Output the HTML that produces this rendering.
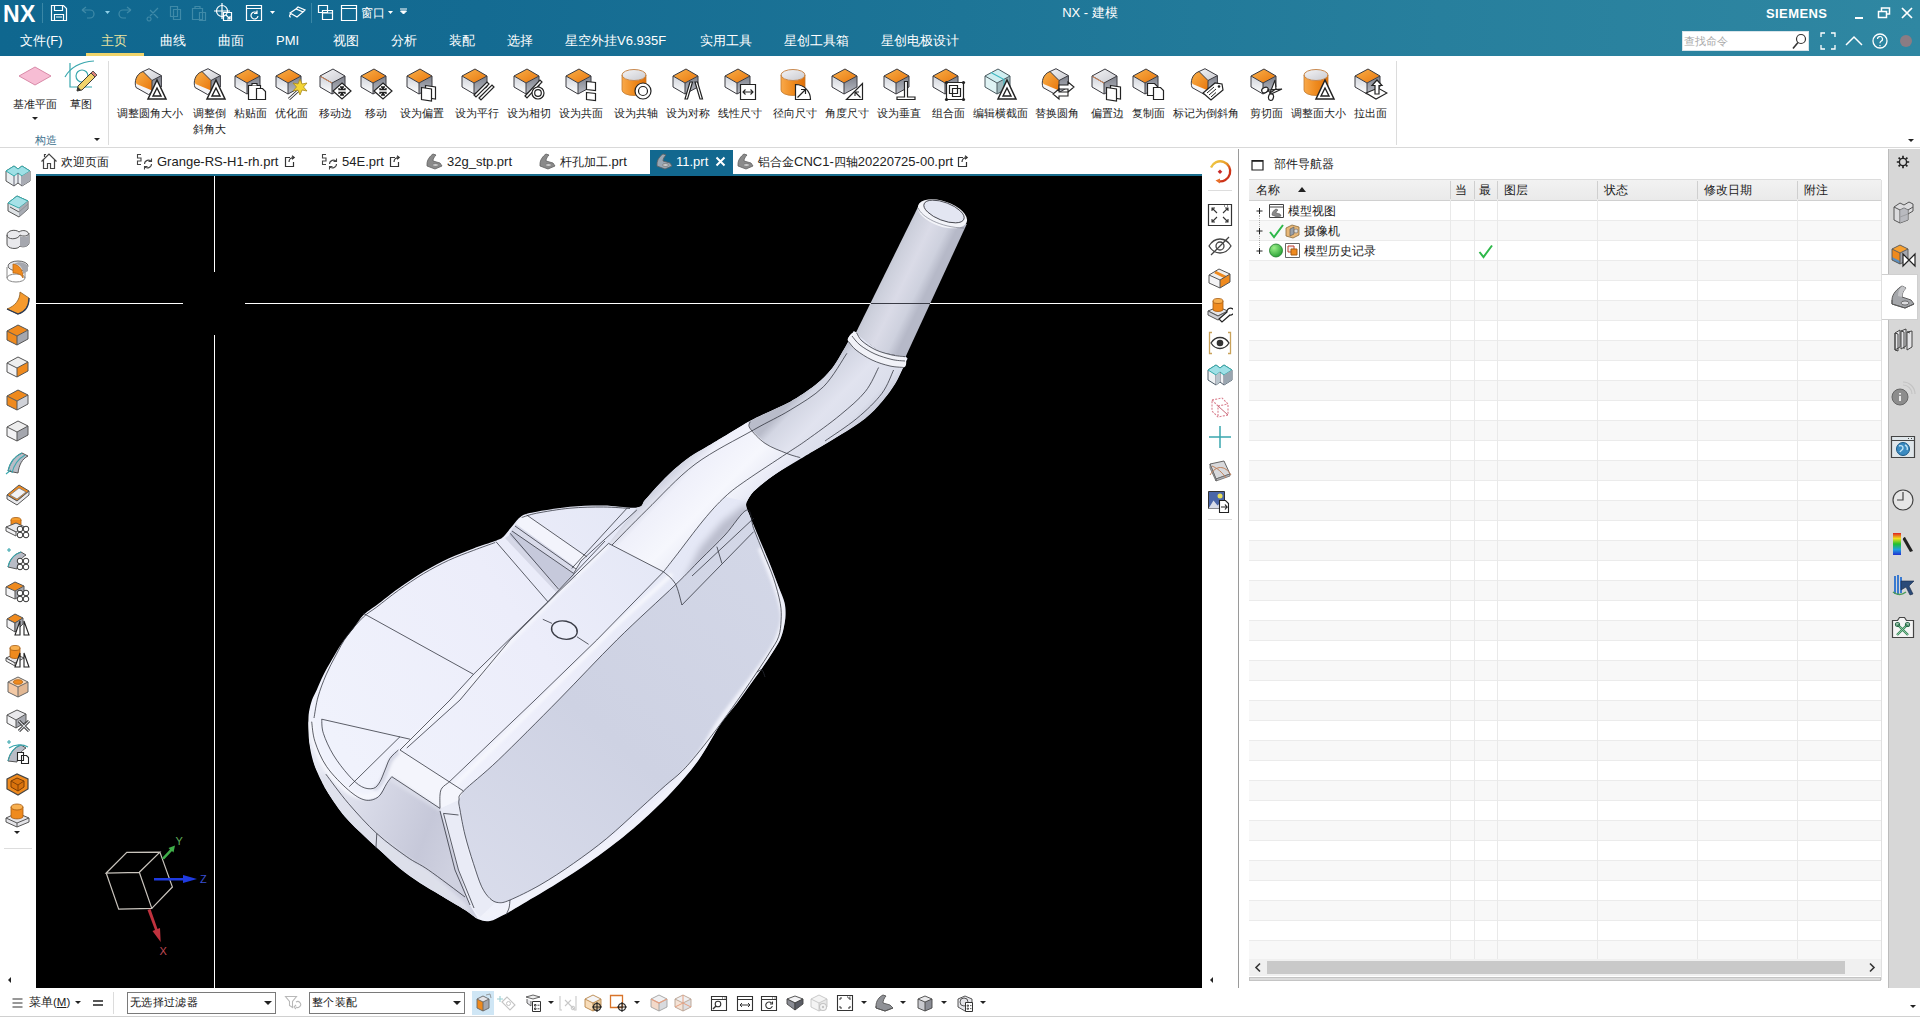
<!DOCTYPE html><html><head><meta charset="utf-8"><title>NX</title><style>*{box-sizing:border-box;margin:0;padding:0}
html,body{width:1920px;height:1019px;overflow:hidden;background:#fff;font-family:"Liberation Sans",sans-serif;color:#222}
.abs{position:absolute}
#hdr{position:absolute;left:0;top:0;width:1920px;height:56px;background:linear-gradient(90deg,#0f678f 0%,#146b92 25%,#1d7597 50%,#277f9d 75%,#2f87a2 100%)}
.menu{position:absolute;top:32px;height:18px;line-height:18px;font-size:13px;color:#fff;white-space:nowrap}
.rlabel{position:absolute;font-size:11px;line-height:16px;color:#222;text-align:center;white-space:nowrap;transform:translateX(-50%)}
.tab{position:absolute;top:153px;height:18px;line-height:18px;font-size:13px;color:#222;white-space:nowrap}
#vp{position:absolute;left:36px;top:176px;width:1166px;height:812px;background:#000;overflow:hidden}
.nh{position:absolute;top:182px;height:17px;line-height:17px;font-size:12px;color:#222;white-space:nowrap}
.tr{position:absolute;font-size:12px;line-height:18px;color:#222;white-space:nowrap}
</style></head><body>
<div id="hdr">
<div class="abs" style="left:3px;top:1px;font-size:23px;line-height:26px;font-weight:bold;color:#fff;letter-spacing:0.5px">NX</div>
<svg class="abs" style="left:40px;top:0" width="380" height="27" viewBox="40 0 380 27" fill="none" stroke="#fff" stroke-width="1.2">
<line x1="42.5" y1="3" x2="42.5" y2="23" stroke="#3a87a6" stroke-width="1"/>
<path d="M51.5 5.5h12l3 3v12h-15z M54.5 5.5v5h8v-5 M54.5 20.500v-6h9v6 M56 17h6"/>
<g stroke="#3f8aa8"><path d="M82 10l4-3m-4 3l4 3m-4-3h8a4 4 0 0 1 0 8h-3"/><path d="M131 10l-4-3m4 3l-4 3m4-3h-8a4 4 0 0 0 0 8h3"/>
<path d="M150 16l8-8m-8 2l8 8 M149 17a2 2 0 1 0 .1 0"/><path d="M170.500 6.500h7v10h-7z M173.500 9.500h7v10h-7z"/><path d="M192.500 8.500h10v11h-10z M195 8.500v-2h5v2 M199.500 12.500h6v8h-6z"/></g>
<path d="M105 11h5l-2.500 3z" fill="#8fd0e8" stroke="none"/>
<circle cx="222" cy="11" r="5.500"/><path d="M222 3v16 M214 11h16 M223.500 12.500h8v8h-8z M226 15l4 4m0-3v3h-3"/>
<path d="M246.500 5.500h15v15h-15z M246.500 8.500h15 M257 13a3.500 3.500 0 1 0 1 3 M257 10.500v3h-3"/>
<path d="M270 11h5l-2.500 3z" fill="#fff" stroke="none"/>
<path d="M290 13l6-4 7 3-6 5z M296 9l2-2 7 3-2 2 M291 14c-2 1-2 3 0 3" />
<line x1="311.500" y1="3" x2="311.500" y2="23" stroke="#3a87a6" stroke-width="1"/>
<path d="M318.500 5.500h9v7h-9z M322.500 10.500h10v9h-10z M322.500 13h10"/>
<path d="M341.500 5.500h15v15h-15z M341.500 8.500h15"/>
<path d="M388 11h5l-2.500 3z" fill="#fff" stroke="none"/><path d="M400 9h7 M400.500 11h6l-3 3z" fill="#fff" stroke-width="1"/>
</svg>
<div class="abs" style="left:361px;top:5px;font-size:12px;line-height:16px;color:#fff">窗口</div>
<div class="abs" style="left:1040px;width:100px;text-align:center;top:4px;font-size:13px;line-height:18px;color:#fff">NX - 建模</div>
<div class="abs" style="left:1766px;top:6px;font-size:13px;line-height:16px;font-weight:bold;color:#fff;letter-spacing:0.4px">SIEMENS</div>
<svg class="abs" style="left:1845px;top:0" width="75" height="27" viewBox="1845 0 75 27" fill="none" stroke="#fff" stroke-width="1.500">
<path d="M1855 18h8" stroke-width="2"/><path d="M1878.500 11.500h8v6h-8z M1881.500 11v-3h8v6h-3"/><path d="M1902 8l10 10m0-10l-10 10" stroke-width="1.700"/></svg>
<div class="menu" style="left:20px;color:#fff">文件(F)</div>
<div class="menu" style="left:101px;color:#e9e3a0">主页</div>
<div class="menu" style="left:160px;color:#fff">曲线</div>
<div class="menu" style="left:218px;color:#fff">曲面</div>
<div class="menu" style="left:276px;color:#fff">PMI</div>
<div class="menu" style="left:333px;color:#fff">视图</div>
<div class="menu" style="left:391px;color:#fff">分析</div>
<div class="menu" style="left:449px;color:#fff">装配</div>
<div class="menu" style="left:507px;color:#fff">选择</div>
<div class="menu" style="left:565px;color:#fff">星空外挂V6.935F</div>
<div class="menu" style="left:700px;color:#fff">实用工具</div>
<div class="menu" style="left:784px;color:#fff">星创工具箱</div>
<div class="menu" style="left:881px;color:#fff">星创电极设计</div>
<div class="abs" style="left:86px;top:53px;width:58px;height:3px;background:#f0d46a"></div>
<div class="abs" style="left:1682px;top:31px;width:127px;height:20px;background:#fff;border:1px solid #d8e4ea;font-size:11px;line-height:18px;color:#aaa;padding-left:1px">查找命令</div>
<svg class="abs" style="left:1785px;top:28px" width="135" height="27" viewBox="1785 28 135 27" fill="none" stroke="#fff" stroke-width="1.300">
<circle cx="1801" cy="39" r="4.500" stroke="#333" stroke-width="1.200"/><path d="M1798 42.500l-5 6" stroke="#333" stroke-width="1.600"/>
<path d="M1821 37v-4h4 M1831 33h4v4 M1835 45v4h-4 M1825 49h-4v-4"/>
<path d="M1846 45l8-8 8 8" stroke-width="1.500"/>
<circle cx="1880" cy="41" r="7"/><path d="M1877.500 39a2.500 2.500 0 1 1 3.500 2.300c-1 .5-1 1-1 2 M1880 45v1.200" stroke-width="1.200"/>
<circle cx="1906" cy="41" r="6" fill="#a9787a" stroke="none" opacity="0.75"/>
</svg>
</div>
<svg width="0" height="0" style="position:absolute"><defs>
<linearGradient id="gO" x1="0" y1="0" x2="1" y2="1"><stop offset="0" stop-color="#f9b04a"/><stop offset="1" stop-color="#e8760c"/></linearGradient>
<linearGradient id="gL" x1="0" y1="0" x2="0" y2="1"><stop offset="0" stop-color="#cfd2da"/><stop offset="1" stop-color="#ffffff"/></linearGradient>
<linearGradient id="gR" x1="0" y1="0" x2="0" y2="1"><stop offset="0" stop-color="#7d808a"/><stop offset="1" stop-color="#b9bcc4"/></linearGradient>
<linearGradient id="gT" x1="0" y1="0" x2="1" y2="1"><stop offset="0" stop-color="#f4f4f6"/><stop offset="1" stop-color="#c9cad0"/></linearGradient>
<linearGradient id="gC" x1="0" y1="0" x2="1" y2="0"><stop offset="0" stop-color="#f9a94a"/><stop offset=".5" stop-color="#ee8a1e"/><stop offset="1" stop-color="#e07008"/></linearGradient>
<g id="cOT"><path d="M1 8L14 1 26 8 13 15Z" fill="url(#gO)"/><path d="M1 8L13 15V26L1 19Z" fill="url(#gL)"/><path d="M13 15L26 8V19L13 26Z" fill="url(#gR)"/><path d="M1 8L14 1 26 8V19L13 26 1 19Z M1 8L13 15 26 8 M13 15V26" fill="none" stroke="#3a3a40" stroke-width="1"/></g>
<g id="cGT"><path d="M1 8L14 1 26 8 13 15Z" fill="url(#gT)"/><path d="M1 8L13 15V26L1 19Z" fill="url(#gL)"/><path d="M13 15L26 8V19L13 26Z" fill="url(#gR)"/><path d="M1 8L14 1 26 8V19L13 26 1 19Z M1 8L13 15 26 8 M13 15V26" fill="none" stroke="#3a3a40" stroke-width="1"/><path d="M1.500 8.500L13 15" stroke="#d98a5a" stroke-width="1"/></g>
<g id="cOL"><path d="M9 3.500L15 .7 27.400 7.600 18 12.500Z" fill="url(#gT)"/><path d="M18 12.500L27.400 7.600V19L18 25.500Z" fill="url(#gR)"/><path d="M2 16L18 22V25.500L14.500 26.500 2 19.500Z" fill="#f4f4f7"/><path d="M9 3.500L18 12.500V22.500L2.500 16C.5 12 2 6 9 3.500Z" fill="url(#gO)"/><path d="M9 3.500L15 .7 27.400 7.600V19L14.500 26.500 2 19.500C0 14 2 6 9 3.500ZM9 3.500L18 12.500 27.400 7.600M18 12.500V25" fill="none" stroke="#3a3a40" stroke-width="1"/></g>
<g id="cCY"><path d="M2 7V22A12 5.500 0 0 0 26 22V7Z" fill="url(#gC)"/><ellipse cx="14" cy="7" rx="12" ry="5.500" fill="url(#gT)" stroke="#c98a50" stroke-width="1"/><path d="M2 7V22A12 5.500 0 0 0 26 22V7" fill="none" stroke="#c07a30" stroke-width=".8"/></g>
<g id="cTE"><path d="M1 8L14 1 26 8 13 15Z" fill="#cfeef0"/><path d="M1 8L13 15V26L1 19Z" fill="#dff3f4"/><path d="M13 15L26 8V19L13 26Z" fill="#9fb8bc"/><path d="M1 8L14 1 26 8V19L13 26 1 19Z M1 8L13 15 26 8 M13 15V26" fill="none" stroke="#4a5a60" stroke-width="1"/><path d="M7 4.500L20 11.500V22" fill="none" stroke="#3bb7c0" stroke-width="1.200"/></g>
<g id="oTri"><path d="M23 12L32 31H14Z" fill="#fff" stroke="#222" stroke-width="1.500" stroke-linejoin="miter"/><path d="M23 20L27 28H19Z" fill="none" stroke="#222" stroke-width="1.400"/></g>
<g id="oClip"><path d="M14.500 17.500h12v14h-12z" fill="#fff" stroke="#222" stroke-width="1.200"/><path d="M18 17.500v-2h5v2" fill="#fff" stroke="#222" stroke-width="1.200"/><path d="M22.500 20.500h6l3 3v8h-9z" fill="#fff" stroke="#222" stroke-width="1.200"/></g>
<g id="oWand"><path d="M14 31l10-9" stroke="#222" stroke-width="3"/><path d="M14 31l10-9" stroke="#fff" stroke-width="1.200"/><path d="M25 11l2 5 5-1-3.500 4 3.500 4-5-1-2 5-2-5-5 1 3.500-4-3.500-4 5 1z" fill="#f3d433" stroke="#a8891c" stroke-width=".8"/></g>
<g id="oMove"><path d="M23 15l9 8-9 8-9-8z" fill="#fff" stroke="#222" stroke-width="1.200"/><path d="M21 19h1.500v2.500H20V20 M25 19h-1.500v2.500H26V20 M21 27h1.500v-2.500H20V26 M25 27h-1.500v-2.500H26V26" fill="none" stroke="#222" stroke-width="1.300"/></g>
<g id="oPages"><path d="M19.500 17.500l10 1.500v12l-10-1.500z" fill="#fff" stroke="#222" stroke-width="1.200"/><path d="M15.500 19.500l10 1.500v12l-10-1.500z" fill="#fff" stroke="#222" stroke-width="1.200"/></g>
<g id="oPar"><path d="M13 27L26 14l2 2L15 29z M18 30L31 17l2 2L20 32z" fill="#fff" stroke="#222" stroke-width="1.200"/></g>
<g id="oTan"><path d="M12 28L27 12l2 2L14 30z" fill="#fff" stroke="#222" stroke-width="1.200"/><circle cx="25" cy="25" r="6" fill="#fff" stroke="#222" stroke-width="1.200"/><circle cx="25" cy="25" r="3.300" fill="#fff" stroke="#222" stroke-width="1.200"/></g>
<g id="oCopl"><path d="M21.500 13.500l9 1v8l-9-1z M21.500 24.500l9 1v7l-9-1z" fill="#fff" stroke="#222" stroke-width="1.200"/></g>
<g id="oRing"><circle cx="23" cy="23" r="8" fill="#fff" stroke="#222" stroke-width="1.200"/><circle cx="23" cy="23" r="4.500" fill="#fff" stroke="#222" stroke-width="1.200"/></g>
<g id="oSym"><path d="M13 31l5-17h2.500l-5 17z M30.500 31l-5-17H23l5 17z" fill="#fff" stroke="#222" stroke-width="1.200"/></g>
<g id="oLin"><path d="M16.500 16.500h15v15h-15z" fill="#fff" stroke="#222" stroke-width="1.200"/><path d="M19 24h10 M21.500 21.500L19 24l2.500 2.500 M26.500 21.500L29 24l-2.500 2.500" fill="none" stroke="#222" stroke-width="1.100"/></g>
<g id="oRad"><path d="M16.500 16.500A15 15 0 0 1 31.500 31.500H16.500Z" fill="#fff" stroke="#222" stroke-width="1.200"/><path d="M18.500 29.500l8-8 M22 21.500h4.500V26" fill="none" stroke="#222" stroke-width="1.200"/></g>
<g id="oAng"><path d="M31.500 15.500v16h-16Z" fill="#fff" stroke="#222" stroke-width="1.200"/><path d="M29.500 29.500l-5-5 M24 28v-4h4" fill="none" stroke="#222" stroke-width="1.100"/></g>
<g id="oPerp"><path d="M21.500 13.500h3v15.500h7.500v2.500h-18v-2.500h7.500z" fill="#fff" stroke="#222" stroke-width="1.200"/></g>
<g id="oComb"><path d="M14.500 14.500h17v17h-17z" fill="#fff" stroke="#222" stroke-width="1.200"/><path d="M17.500 17.500h8v8h-8z M20.500 20.500h8v8h-8z" fill="none" stroke="#222" stroke-width="1.200"/><g fill="#222"><circle cx="14.500" cy="14.500" r="1.600"/><circle cx="31.500" cy="14.500" r="1.600"/><circle cx="14.500" cy="31.500" r="1.600"/><circle cx="31.500" cy="31.500" r="1.600"/></g></g>
<g id="oSwap"><path d="M18 17h9v-3l6 5-6 5v-3h-9z" fill="#fff" stroke="#222" stroke-width="1.100"/><path d="M27 24h-9v-3l-6 5 6 5v-3h9z" fill="#fff" stroke="#222" stroke-width="1.100"/></g>
<g id="oCopy"><path d="M15.500 15.500h7l3 3v9h-10z" fill="#fff" stroke="#222" stroke-width="1.200"/><path d="M21.500 19.500h7l3 3v9h-10z" fill="#fff" stroke="#222" stroke-width="1.200"/></g>
<g id="oTag"><path d="M13 25l12-10 7 1 1 6-12 10z" fill="#fff" stroke="#222" stroke-width="1.200"/><circle cx="29" cy="18.500" r="1.300" fill="#222"/><path d="M17 25l7-6 M19 27l7-6 M21 29l5-4.500" stroke="#222" stroke-width="1"/></g>
<g id="oScis"><ellipse cx="15" cy="22" rx="3.500" ry="2.500" fill="#fff" stroke="#222" stroke-width="1.200" transform="rotate(-30 15 22)"/><ellipse cx="21" cy="29" rx="2.500" ry="3.500" fill="#fff" stroke="#222" stroke-width="1.200" transform="rotate(10 21 29)"/><path d="M18 22l14-1-11 5z M20 25l5-13 1 9z" fill="#fff" stroke="#222" stroke-width="1.100"/></g>
<g id="oUp"><path d="M12 25l12-5 9 5-11 6z" fill="#fff" stroke="#222" stroke-width="1.100"/><path d="M23 12l5 5.500h-3V26h-4v-8.500h-3z" fill="#fff" stroke="#222" stroke-width="1.200"/></g>
</defs></svg>
<div class="abs" style="left:0;top:56px;width:1920px;height:92px;background:#fff;border-bottom:1px solid #d9d9d9"></div>
<svg class="abs" style="left:10px;top:58px" width="100" height="44" viewBox="10 58 100 44">
<path d="M19 76L35 67 51 76 35 85Z" fill="#f7bdd4" stroke="#d98aa8" stroke-width="1"/>
<path d="M70 63V87H92" fill="none" stroke="#3aa7ae" stroke-width="1.200"/><path d="M65 77C70 68 80 62 94 61" fill="none" stroke="#3aa7ae" stroke-width="1.200"/><circle cx="82" cy="76" r="6" fill="none" stroke="#3aa7ae" stroke-width="1.200"/>
<path d="M77 91l1-5 13-13 4 4-13 13z" fill="#f2d36b" stroke="#3a3a3a" stroke-width="1"/><path d="M91 73l2-2 4 4-2 2z" fill="#d9837a" stroke="#3a3a3a" stroke-width=".8"/><path d="M77 91l1-4 3 3z" fill="#333"/>
</svg>
<div class="rlabel" style="left:35px;top:96px">基准平面</div>
<div class="rlabel" style="left:81px;top:96px">草图</div>
<div class="abs" style="left:32px;top:117px;width:0;height:0;border-left:3px solid transparent;border-right:3px solid transparent;border-top:3.500px solid #222"></div>
<div class="rlabel" style="left:46px;top:132px;color:#3b6f8c">构造</div>
<div class="abs" style="left:94px;top:138px;width:0;height:0;border-left:3px solid transparent;border-right:3px solid transparent;border-top:3.500px solid #222"></div>
<div class="abs" style="left:108px;top:61px;width:1px;height:84px;background:#dcdcdc"></div>
<div class="abs" style="left:1396px;top:61px;width:1px;height:84px;background:#dcdcdc"></div>
<svg class="abs" style="left:134px;top:68px" width="34" height="34" viewBox="0 0 34 34"><use href="#cOL"/><use href="#oTri"/></svg>
<div class="rlabel" style="left:150px;top:105px">调整圆角大小</div>
<svg class="abs" style="left:193px;top:68px" width="34" height="34" viewBox="0 0 34 34"><use href="#cOL"/><use href="#oTri"/></svg>
<div class="rlabel" style="left:209px;top:105px">调整倒<br>斜角大</div>
<svg class="abs" style="left:234px;top:68px" width="34" height="34" viewBox="0 0 34 34"><use href="#cOT"/><use href="#oClip"/></svg>
<div class="rlabel" style="left:250px;top:105px">粘贴面</div>
<svg class="abs" style="left:275px;top:68px" width="34" height="34" viewBox="0 0 34 34"><use href="#cOT"/><use href="#oWand"/></svg>
<div class="rlabel" style="left:291px;top:105px">优化面</div>
<svg class="abs" style="left:319px;top:68px" width="34" height="34" viewBox="0 0 34 34"><use href="#cGT"/><use href="#oMove"/></svg>
<div class="rlabel" style="left:335px;top:105px">移动边</div>
<svg class="abs" style="left:360px;top:68px" width="34" height="34" viewBox="0 0 34 34"><use href="#cOT"/><use href="#oMove"/></svg>
<div class="rlabel" style="left:376px;top:105px">移动</div>
<svg class="abs" style="left:406px;top:68px" width="34" height="34" viewBox="0 0 34 34"><use href="#cOT"/><use href="#oPages"/></svg>
<div class="rlabel" style="left:422px;top:105px">设为偏置</div>
<svg class="abs" style="left:461px;top:68px" width="34" height="34" viewBox="0 0 34 34"><use href="#cOT"/><use href="#oPar"/></svg>
<div class="rlabel" style="left:477px;top:105px">设为平行</div>
<svg class="abs" style="left:513px;top:68px" width="34" height="34" viewBox="0 0 34 34"><use href="#cOT"/><use href="#oTan"/></svg>
<div class="rlabel" style="left:529px;top:105px">设为相切</div>
<svg class="abs" style="left:565px;top:68px" width="34" height="34" viewBox="0 0 34 34"><use href="#cOT"/><use href="#oCopl"/></svg>
<div class="rlabel" style="left:581px;top:105px">设为共面</div>
<svg class="abs" style="left:620px;top:68px" width="34" height="34" viewBox="0 0 34 34"><use href="#cCY"/><use href="#oRing"/></svg>
<div class="rlabel" style="left:636px;top:105px">设为共轴</div>
<svg class="abs" style="left:672px;top:68px" width="34" height="34" viewBox="0 0 34 34"><use href="#cOT"/><use href="#oSym"/></svg>
<div class="rlabel" style="left:688px;top:105px">设为对称</div>
<svg class="abs" style="left:724px;top:68px" width="34" height="34" viewBox="0 0 34 34"><use href="#cOT"/><use href="#oLin"/></svg>
<div class="rlabel" style="left:740px;top:105px">线性尺寸</div>
<svg class="abs" style="left:779px;top:68px" width="34" height="34" viewBox="0 0 34 34"><use href="#cCY"/><use href="#oRad"/></svg>
<div class="rlabel" style="left:795px;top:105px">径向尺寸</div>
<svg class="abs" style="left:831px;top:68px" width="34" height="34" viewBox="0 0 34 34"><use href="#cOT"/><use href="#oAng"/></svg>
<div class="rlabel" style="left:847px;top:105px">角度尺寸</div>
<svg class="abs" style="left:883px;top:68px" width="34" height="34" viewBox="0 0 34 34"><use href="#cOT"/><use href="#oPerp"/></svg>
<div class="rlabel" style="left:899px;top:105px">设为垂直</div>
<svg class="abs" style="left:932px;top:68px" width="34" height="34" viewBox="0 0 34 34"><use href="#cOT"/><use href="#oComb"/></svg>
<div class="rlabel" style="left:948px;top:105px">组合面</div>
<svg class="abs" style="left:984px;top:68px" width="34" height="34" viewBox="0 0 34 34"><use href="#cTE"/><use href="#oTri"/></svg>
<div class="rlabel" style="left:1000px;top:105px">编辑横截面</div>
<svg class="abs" style="left:1041px;top:68px" width="34" height="34" viewBox="0 0 34 34"><use href="#cOL"/><use href="#oSwap"/></svg>
<div class="rlabel" style="left:1057px;top:105px">替换圆角</div>
<svg class="abs" style="left:1091px;top:68px" width="34" height="34" viewBox="0 0 34 34"><use href="#cGT"/><use href="#oPages"/></svg>
<div class="rlabel" style="left:1107px;top:105px">偏置边</div>
<svg class="abs" style="left:1132px;top:68px" width="34" height="34" viewBox="0 0 34 34"><use href="#cOT"/><use href="#oCopy"/></svg>
<div class="rlabel" style="left:1148px;top:105px">复制面</div>
<svg class="abs" style="left:1190px;top:68px" width="34" height="34" viewBox="0 0 34 34"><use href="#cOL"/><use href="#oTag"/></svg>
<div class="rlabel" style="left:1206px;top:105px">标记为倒斜角</div>
<svg class="abs" style="left:1250px;top:68px" width="34" height="34" viewBox="0 0 34 34"><use href="#cOT"/><use href="#oScis"/></svg>
<div class="rlabel" style="left:1266px;top:105px">剪切面</div>
<svg class="abs" style="left:1302px;top:68px" width="34" height="34" viewBox="0 0 34 34"><use href="#cCY"/><use href="#oTri"/></svg>
<div class="rlabel" style="left:1318px;top:105px">调整面大小</div>
<svg class="abs" style="left:1354px;top:68px" width="34" height="34" viewBox="0 0 34 34"><use href="#cOT"/><use href="#oUp"/></svg>
<div class="rlabel" style="left:1370px;top:105px">拉出面</div>
<div class="abs" style="left:1908px;top:139px;width:0;height:0;border-left:3px solid transparent;border-right:3px solid transparent;border-top:3.500px solid #222"></div>
<div class="abs" style="left:36px;top:174px;width:1166px;height:2px;background:#1a6e8e"></div>
<svg class="abs" style="left:40px;top:152px" width="18" height="18" viewBox="0 0 18 18" fill="none" stroke="#444" stroke-width="1.200"><path d="M1.500 9.500L9 2l7.500 7.500M3.500 8v8.500h4v-5h3v5h4V8M4.500 5V2.500h1.500"/></svg>
<div class="tab" style="left:61px"><span style="font-size:12px">欢迎页面</span></div>
<svg class="abs" style="left:136px;top:153px" width="18" height="18" viewBox="0 0 18 18" fill="none" stroke="#444" stroke-width="1.100"><path d="M5 1.500H1.500V5H5V8H1.500V11.500H5"/><path d="M8.500 11a4 4 0 0 1 7-2.500M15.500 5.500v3h-3M15.500 11a4 4 0 0 1-7 2.500M8.500 16.500v-3h3"/></svg>
<div class="tab" style="left:157px">Grange-RS-H1-rh.prt</div>
<svg class="abs" style="left:284px;top:155px" width="12" height="13" viewBox="0 0 12 13" fill="none" stroke="#333" stroke-width="1.200"><path d="M6 2.500H1.500V11.500H9.500V7"/><path d="M5 7C5 4 7 2.500 10 2.500M8 .8l2.200 1.700L8 4.300"/></svg>
<svg class="abs" style="left:321px;top:153px" width="18" height="18" viewBox="0 0 18 18" fill="none" stroke="#444" stroke-width="1.100"><path d="M5 1.500H1.500V5H5V8H1.500V11.500H5"/><path d="M8.500 11a4 4 0 0 1 7-2.500M15.500 5.500v3h-3M15.500 11a4 4 0 0 1-7 2.500M8.500 16.500v-3h3"/></svg>
<div class="tab" style="left:342px">54E.prt</div>
<svg class="abs" style="left:389px;top:155px" width="12" height="13" viewBox="0 0 12 13" fill="none" stroke="#333" stroke-width="1.200"><path d="M6 2.500H1.500V11.500H9.500V7"/><path d="M5 7C5 4 7 2.500 10 2.500M8 .8l2.200 1.700L8 4.300"/></svg>
<svg class="abs" style="left:425px;top:152px" width="19" height="18" viewBox="0 0 19 18"><path d="M2 12C2 8 5 4 8 2l3 1c-2 2-3 4-3 6l7 2 2 3-7 3-8-3z" fill="#8a8a8a" stroke="#5f5f5f" stroke-width=".8"/><ellipse cx="10.500" cy="13" rx="3" ry="1.500" fill="#c9c9c9" stroke="#666" stroke-width=".6"/></svg>
<div class="tab" style="left:447px">32g_stp.prt</div>
<svg class="abs" style="left:538px;top:152px" width="19" height="18" viewBox="0 0 19 18"><path d="M2 12C2 8 5 4 8 2l3 1c-2 2-3 4-3 6l7 2 2 3-7 3-8-3z" fill="#8a8a8a" stroke="#5f5f5f" stroke-width=".8"/><ellipse cx="10.500" cy="13" rx="3" ry="1.500" fill="#c9c9c9" stroke="#666" stroke-width=".6"/></svg>
<div class="tab" style="left:560px"><span style="font-size:12px">杆孔加工</span>.prt</div>
<div class="abs" style="left:650px;top:150px;width:83px;height:26px;background:#12688f"></div>
<svg class="abs" style="left:655px;top:152px" width="19" height="18" viewBox="0 0 19 18"><path d="M2 12C2 8 5 4 8 2l3 1c-2 2-3 4-3 6l7 2 2 3-7 3-8-3z" fill="#9aa7b4" stroke="#5f5f5f" stroke-width=".8"/><ellipse cx="10.500" cy="13" rx="3" ry="1.500" fill="#c9c9c9" stroke="#666" stroke-width=".6"/></svg>
<div class="tab" style="left:676px;color:#fff">11.prt</div>
<svg class="abs" style="left:715px;top:156px" width="11" height="11" viewBox="0 0 11 11"><path d="M1.500 1.500l8 8m0-8l-8 8" stroke="#fff" stroke-width="2"/></svg>
<svg class="abs" style="left:736px;top:152px" width="19" height="18" viewBox="0 0 19 18"><path d="M2 12C2 8 5 4 8 2l3 1c-2 2-3 4-3 6l7 2 2 3-7 3-8-3z" fill="#8a8a8a" stroke="#5f5f5f" stroke-width=".8"/><ellipse cx="10.500" cy="13" rx="3" ry="1.500" fill="#c9c9c9" stroke="#666" stroke-width=".6"/></svg>
<div class="tab" style="left:758px"><span style="font-size:12px">铝合金</span>CNC1-<span style="font-size:12px">四轴</span>20220725-00.prt</div>
<svg class="abs" style="left:957px;top:155px" width="12" height="13" viewBox="0 0 12 13" fill="none" stroke="#333" stroke-width="1.200"><path d="M6 2.500H1.500V11.500H9.500V7"/><path d="M5 7C5 4 7 2.500 10 2.500M8 .8l2.200 1.700L8 4.300"/></svg>
<svg class="abs" style="left:5px;top:163px" width="26" height="26" viewBox="0 0 26 26"><path d="M1 8L9 3l4 3 4-3 8 5v10l-8 5-4-3-4 3-8-5z" fill="#e8ecef" stroke="#555" stroke-width="1"/><path d="M1 8L9 3l4 3 4-3 8 5-8 5-4-3-4 3z" fill="#9fe0e6" stroke="#3aa" stroke-width="1"/><path d="M9 13v10M17 13v10M13 10v10" stroke="#667" stroke-width="1"/><path d="M17 13l8-5v10l-8 5z" fill="#a8abb3"/></svg>
<svg class="abs" style="left:5px;top:194px" width="26" height="26" viewBox="0 0 26 26"><path d="M3 9L12 2l11 5v8l-9 8L3 17z" fill="#dfe3e6" stroke="#555" stroke-width="1"/><path d="M3 9L12 2l11 5-9 7z" fill="#a6e1e7" stroke="#3aa" stroke-width="1"/><path d="M5 13l9 5 9-8" fill="none" stroke="#555" stroke-width="1"/><path d="M14 14v9l9-8V7z" fill="#9a9da6" opacity=".8"/></svg>
<svg class="abs" style="left:5px;top:226px" width="26" height="26" viewBox="0 0 26 26"><path d="M2 9c0-5 9-6 12-3 4-3 10-1 10 3v8c0 3-6 5-9 3-2 4-13 3-13-2z" fill="#e9e9ec" stroke="#555" stroke-width="1"/><path d="M2 9c0 5 11 5 13 0 3 2 9 1 9-2" fill="none" stroke="#555" stroke-width="1"/><path d="M15 10v10c3 2 9 0 9-3V8c0 3-6 4-9 2z" fill="#a5a7ae"/></svg>
<svg class="abs" style="left:5px;top:258px" width="26" height="26" viewBox="0 0 26 26"><ellipse cx="11" cy="20" rx="9" ry="4" fill="#fff" stroke="#888" stroke-width="1"/><path d="M2 9v11M20 9v11" stroke="#888" stroke-width="1"/><ellipse cx="13" cy="8" rx="10" ry="5" fill="#e6e6ea" stroke="#666" stroke-width="1"/><path d="M9 6c6 0 9 4 9 10l5-3V8c-3-4-10-5-14-2z" fill="#a5a7ae"/><path d="M8 6v9c5 0 9 2 10 5 0-8-3-13-10-14z" fill="#ef8a1e" stroke="#b86510" stroke-width=".8"/></svg>
<svg class="abs" style="left:5px;top:290px" width="26" height="26" viewBox="0 0 26 26"><path d="M2 19L13 24C20 22 24 16 24 8L15 2C15 10 10 16 2 19Z" fill="#f59a2e" stroke="#8a5a20" stroke-width=".8"/><path d="M2 19l11 5c7-2 11-8 11-16" fill="none" stroke="#2a3a55" stroke-width="1.300"/></svg>
<svg class="abs" style="left:5px;top:322px" width="26" height="26" viewBox="0 0 26 26"><path d="M2 9L13 3l10 5-11 6z" fill="#ef8a1e"/><path d="M2 9l10 5v9L2 18z" fill="#ef8a1e"/><path d="M12 14l11-6v9l-11 6z" fill="#a5a7ae"/><path d="M2 9L13 3l10 5v9l-11 6-10-5zM2 9l10 5 11-6M12 14v9" fill="none" stroke="#555" stroke-width="1"/></svg>
<svg class="abs" style="left:5px;top:354px" width="26" height="26" viewBox="0 0 26 26"><path d="M2 9L13 3l10 5-11 6z" fill="#eee"/><path d="M2 9l10 5v9L2 18z" fill="#f3f3f5"/><path d="M12 14l11-6v9l-11 6z" fill="#ef8a1e"/><path d="M2 9L13 3l10 5v9l-11 6-10-5zM2 9l10 5 11-6M12 14v9" fill="none" stroke="#555" stroke-width="1"/></svg>
<svg class="abs" style="left:5px;top:387px" width="26" height="26" viewBox="0 0 26 26"><path d="M2 9L13 3l10 5-11 6z" fill="#ef8a1e"/><path d="M2 9l10 5v9L2 18z" fill="#ef8a1e"/><path d="M12 14l11-6v9l-11 6z" fill="#d0d2d8"/><path d="M2 9L13 3l10 5v9l-11 6-10-5zM2 9l10 5 11-6M12 14v9" fill="none" stroke="#555" stroke-width="1"/></svg>
<svg class="abs" style="left:5px;top:418px" width="26" height="26" viewBox="0 0 26 26"><path d="M2 9L13 3l10 5-11 6z" fill="#eee"/><path d="M2 9l10 5v9L2 18z" fill="#f3f3f5"/><path d="M12 14l11-6v9l-11 6z" fill="#a5a7ae"/><path d="M2 9L13 3l10 5v9l-11 6-10-5zM2 9l10 5 11-6M12 14v9" fill="none" stroke="#555" stroke-width="1"/></svg>
<svg class="abs" style="left:5px;top:451px" width="26" height="26" viewBox="0 0 26 26"><path d="M3 20C5 11 10 5 17 2l6 3c-6 3-9 9-10 17z" fill="#b9bcc6" stroke="#555" stroke-width="1"/><path d="M3 20C5 11 10 5 17 2M7 22C9 13 13 8 20 4M1 23l5-4" fill="none" stroke="#3aa7ae" stroke-width="1.100"/></svg>
<svg class="abs" style="left:5px;top:482px" width="26" height="26" viewBox="0 0 26 26"><path d="M2 13L14 3l10 6-12 10z" fill="#ef8a1e" stroke="#555" stroke-width="1"/><path d="M2 13v4l10 6 12-10V9L12 19z" fill="#e9e9ec" stroke="#555" stroke-width="1"/><path d="M5 13l9-7 7 4-9 7z" fill="#f2f2f4" stroke="#777" stroke-width=".8"/></svg>
<svg class="abs" style="left:5px;top:515px" width="26" height="26" viewBox="0 0 26 26"><ellipse cx="11" cy="5" rx="5" ry="2.500" fill="#f6a030" stroke="#a65b10" stroke-width=".8"/><path d="M6 5v5c2 2 8 2 10 0V5" fill="#ef8a1e" stroke="#a65b10" stroke-width=".8"/><path d="M1 12l10-4 9 4-9 5z" fill="#e9e9ec" stroke="#555" stroke-width="1"/><path d="M1 12v4l10 5v-4z" fill="#f3f3f5" stroke="#555" stroke-width="1"/><g fill="#fff" stroke="#333" stroke-width="1"><circle cx="15" cy="14" r="2.800"/><circle cx="21" cy="14" r="2.800"/><circle cx="15" cy="20" r="2.800"/><circle cx="21" cy="20" r="2.800"/></g></svg>
<svg class="abs" style="left:5px;top:547px" width="26" height="26" viewBox="0 0 26 26"><path d="M3 20C5 11 10 7 16 5l5 3c-5 3-8 7-9 14z" fill="#b9bcc6" stroke="#555" stroke-width="1"/><path d="M3 20C5 11 10 7 16 5M2 3h4M4 1v4" fill="none" stroke="#3aa7ae" stroke-width="1.100"/><g fill="#fff" stroke="#333" stroke-width="1"><circle cx="15" cy="14" r="2.800"/><circle cx="21" cy="14" r="2.800"/><circle cx="15" cy="20" r="2.800"/><circle cx="21" cy="20" r="2.800"/></g></svg>
<svg class="abs" style="left:5px;top:579px" width="26" height="26" viewBox="0 0 26 26"><path d="M1 8l9-5 9 4-9 5z" fill="#ef8a1e"/><path d="M1 8l9 4v8l-9-4z" fill="#f3f3f5"/><path d="M10 12l9-5v8l-9 5z" fill="#a5a7ae"/><path d="M1 8l9-5 9 4v8l-9 5-9-4zM1 8l9 4 9-5M10 12v8" fill="none" stroke="#555" stroke-width="1"/><g fill="#fff" stroke="#333" stroke-width="1"><circle cx="15" cy="14" r="2.800"/><circle cx="21" cy="14" r="2.800"/><circle cx="15" cy="20" r="2.800"/><circle cx="21" cy="20" r="2.800"/></g></svg>
<svg class="abs" style="left:5px;top:611px" width="26" height="26" viewBox="0 0 26 26"><path d="M2 8l8-5 8 4-8 5z" fill="#ef8a1e" stroke="#555" stroke-width="1"/><path d="M2 8v8l8 5v-9z" fill="#f3f3f5" stroke="#555" stroke-width="1"/><path d="M10 12l8-5v6l-8 8z" fill="#a5a7ae" stroke="#555" stroke-width="1"/><path d="M10 24l5-14v14z M24 24l-5-14v14z" fill="#fff" stroke="#222" stroke-width="1.100"/></svg>
<svg class="abs" style="left:5px;top:643px" width="26" height="26" viewBox="0 0 26 26"><path d="M1 15l9-4 9 4-9 5z" fill="#e4e4e8" stroke="#555" stroke-width="1"/><path d="M1 15v3l9 5v-3z" fill="#f3f3f5" stroke="#555" stroke-width="1"/><path d="M5 5v9c2 2 8 2 10 0V5z" fill="#ef8a1e" stroke="#a65b10" stroke-width=".8"/><ellipse cx="10" cy="5" rx="5" ry="2.500" fill="#f8b050" stroke="#a65b10" stroke-width=".8"/><path d="M10 24l5-14v14z M24 24l-5-14v14z" fill="#fff" stroke="#222" stroke-width="1.100"/></svg>
<svg class="abs" style="left:5px;top:674px" width="26" height="26" viewBox="0 0 26 26"><path d="M3 8l10-5 10 5-10 5z" fill="#f6d9bd"/><path d="M3 8l10 5v10l-10-5z" fill="#f3c9a5"/><path d="M13 13l10-5v10l-10 5z" fill="#e2b894"/><path d="M3 8l10-5 10 5v10l-10 5-10-5zM3 8l10 5 10-5M13 13v10" fill="none" stroke="#666" stroke-width="1"/><ellipse cx="13" cy="8" rx="4.500" ry="2.300" fill="#ef8a1e" stroke="#a65b10" stroke-width=".7"/></svg>
<svg class="abs" style="left:5px;top:707px" width="26" height="26" viewBox="0 0 26 26"><path d="M2 8L12 3l9 4-10 6z" fill="#e9e9ec"/><path d="M2 8l9 5v8l-9-5z" fill="#f3f3f5"/><path d="M11 13l10-6v8l-10 6z" fill="#a5a7ae"/><path d="M2 8L12 3l9 4v8l-10 6-9-5zM2 8l9 5 10-6M11 13v8" fill="none" stroke="#555" stroke-width="1"/><path d="M14 14l10 10M24 14L14 24" stroke="#222" stroke-width="3"/><path d="M14 14l10 10M24 14L14 24" stroke="#d8dade" stroke-width="1.200"/></svg>
<svg class="abs" style="left:5px;top:739px" width="26" height="26" viewBox="0 0 26 26"><path d="M3 22C5 13 10 8 16 6l5 3c-5 3-8 7-9 14z" fill="#b9bcc6" stroke="#555" stroke-width="1"/><path d="M3 22C5 13 10 8 16 6M2 3h4M4 1v4M4 9C10 5 18 5 23 8" fill="none" stroke="#3aa7ae" stroke-width="1.100"/><path d="M12.500 13.500h6v8h-6zM16.500 16.500h5l2 2v6h-7z" fill="#fff" stroke="#222" stroke-width="1.100"/></svg>
<svg class="abs" style="left:5px;top:771px" width="26" height="26" viewBox="0 0 26 26"><path d="M2 8l10-5 11 5v10l-10 6-11-6z" fill="#ef8a1e" stroke="#444" stroke-width="1.200"/><path d="M6 10l6-3 7 3v6l-6 4-7-4z" fill="#d9720c" stroke="#7a3c05" stroke-width="1"/><path d="M6 10l7 4 6-4M13 14v6" fill="none" stroke="#7a3c05" stroke-width=".9"/></svg>
<svg class="abs" style="left:5px;top:802px" width="26" height="26" viewBox="0 0 26 26"><path d="M1 16l11-5 12 5v4l-12 5-11-5z" fill="#e4e4e8" stroke="#555" stroke-width="1"/><path d="M1 16l11 5 12-5M12 21v4" fill="none" stroke="#555" stroke-width="1"/><path d="M6 5v10c2 2.500 10 2.500 12 0V5z" fill="#ef8a1e" stroke="#a65b10" stroke-width=".8"/><ellipse cx="12" cy="5" rx="6" ry="3" fill="#f8b050" stroke="#a65b10" stroke-width=".8"/></svg>
<div class="abs" style="left:14px;top:831px;width:0;height:0;border-left:3px solid transparent;border-right:3px solid transparent;border-top:3.500px solid #222"></div>
<div class="abs" style="left:4px;top:848px;width:28px;height:1px;background:#ddd"></div>
<div class="abs" style="left:8px;top:977px;width:0;height:0;border-top:3px solid transparent;border-bottom:3px solid transparent;border-right:3.500px solid #222"></div>
<div id="vp"><svg width="1166" height="812" viewBox="36 176 1166 812" style="position:absolute;left:0;top:0">
<!--MODEL-->
<path d="M214.500 176V272M214.500 335V988M36 303.500H183M245 303.500H1202" stroke="#fff" stroke-width="1" fill="none"/>
<defs>
<linearGradient id="mShaft" gradientUnits="userSpaceOnUse" x1="872" y1="262" x2="928" y2="289"><stop offset="0" stop-color="#9b9eac"/><stop offset=".1" stop-color="#b9bcc9"/><stop offset=".35" stop-color="#cdd0dc"/><stop offset=".6" stop-color="#dadbe7"/><stop offset=".85" stop-color="#ced1de"/><stop offset="1" stop-color="#b6b9c8"/></linearGradient>
<linearGradient id="mNeckA" gradientUnits="userSpaceOnUse" x1="800" y1="392" x2="850" y2="440"><stop offset="0" stop-color="#b9bcca"/><stop offset=".12" stop-color="#d3d6e3"/><stop offset=".45" stop-color="#e1e3ef"/><stop offset=".8" stop-color="#dbdeeb"/><stop offset="1" stop-color="#c4c7d6"/></linearGradient>
<linearGradient id="mNeckB" gradientUnits="userSpaceOnUse" x1="690" y1="452" x2="760" y2="520"><stop offset="0" stop-color="#cdd0de"/><stop offset=".15" stop-color="#eff0fa"/><stop offset=".5" stop-color="#f6f7fd"/><stop offset=".8" stop-color="#e6e8f4"/><stop offset="1" stop-color="#c8cbda"/></linearGradient>
<linearGradient id="mFace" gradientUnits="userSpaceOnUse" x1="470" y1="890" x2="770" y2="540"><stop offset="0" stop-color="#d9dceb"/><stop offset=".45" stop-color="#ced2e3"/><stop offset="1" stop-color="#d3d7e7"/></linearGradient>
<linearGradient id="mTop" gradientUnits="userSpaceOnUse" x1="320" y1="720" x2="620" y2="510"><stop offset="0" stop-color="#f0f2fc"/><stop offset=".6" stop-color="#ecedfa"/><stop offset="1" stop-color="#e5e8f6"/></linearGradient>
<linearGradient id="mSole" gradientUnits="userSpaceOnUse" x1="325" y1="790" x2="462" y2="842"><stop offset="0" stop-color="#e7e9f3"/><stop offset=".35" stop-color="#d6d8e6"/><stop offset=".75" stop-color="#c6c8d9"/><stop offset="1" stop-color="#cfd1e0"/></linearGradient>
<linearGradient id="mRidge" gradientUnits="userSpaceOnUse" x1="430" y1="730" x2="640" y2="530"><stop offset="0" stop-color="#edeffa"/><stop offset="1" stop-color="#e9ebf8"/></linearGradient>
<filter id="bl1" x="-20%" y="-20%" width="140%" height="140%"><feGaussianBlur stdDeviation="1.5"/></filter><filter id="bl3" x="-30%" y="-30%" width="160%" height="160%"><feGaussianBlur stdDeviation="3.5"/></filter>
<clipPath id="cSil"><path d="M848.4 341C847.6 343.1 846.2 345.4 843.5 350C840.8 354.6 836.6 362.6 831.9 368.4C827.2 374.2 822.2 379.4 815.2 385C808.2 390.6 798.6 397 790.2 401.7C781.9 406.4 772.1 410.1 765.1 413.4C758.1 416.7 755.4 417.8 748.4 421.7C741.4 425.6 730.3 432.6 723.4 436.8C716.5 441 712.3 443.5 706.7 446.8C701.1 450.1 695.5 452.9 690 456.8C684.5 460.7 678.9 465.1 673.4 470.1C667.9 475.1 661.4 481.8 656.7 486.8C652 491.8 648.3 496.6 645 500C641.7 503.4 643.9 506.6 637 507.5C630.1 508.4 614.7 505.5 603.5 505.4C592.3 505.3 581.1 505.6 570 506.7C558.9 507.8 544.8 510.2 536.7 511.7C528.7 513.2 525.9 513.4 521.7 515.9C517.5 518.4 514.8 523.2 511.7 526.7C508.6 530.2 506.2 534.3 503.4 536.7C500.6 539.1 500 539 495 541C490 543 481.2 545.5 473.5 548.4C465.8 551.3 456.8 554.5 448.5 558.4C440.2 562.3 431.9 566.7 423.5 571.7C415.1 576.7 406.2 582.9 398.4 588.4C390.6 593.9 382.6 600.6 376.8 605C371 609.4 367.3 611.1 363.4 615C359.5 618.9 357 623.7 353.4 628.4C349.8 633.1 345.3 638.1 341.7 643.4C338.1 648.7 334.8 654.7 331.7 660C328.6 665.3 325.9 670 323.4 675C320.9 680 318.6 685.8 316.7 690C314.8 694.2 313.3 696.3 312 700C310.7 703.7 309.6 708.4 309 712C308.4 715.6 308.5 718.4 308.4 721.7C308.3 725 308.5 728.7 308.6 732C308.7 735.3 308.7 737.9 309.2 741.7C309.7 745.5 310.5 750.8 311.5 755C312.5 759.2 313.4 762.5 315 766.7C316.6 770.9 318.8 775.5 321 780C323.2 784.5 324.4 787.3 328.4 793.4C332.4 799.5 338.9 809.6 345 816.8C351.1 824 358.6 830.7 365 836.8C371.4 842.9 377.6 848.2 383.4 853.5C389.2 858.8 393.9 863.6 400 868.5C406.1 873.4 413.3 878.6 420 883C426.7 887.4 432.5 890.5 440 895C447.5 899.5 458.6 906 465 910C471.4 914 474.2 917.5 478.4 919.3C482.6 921.1 485.8 921.7 490 921C494.2 920.3 497.8 917.9 503.4 915C509 912.1 514.5 908.8 523.4 903.5C532.3 898.2 545.7 890.5 556.8 883.5C567.9 876.5 578.9 869.6 590 861.8C601.1 854 613.8 844.5 623.5 836.7C633.2 828.9 640.1 822.8 648.5 815C656.9 807.2 665.2 799.2 673.6 790C682 780.8 690.9 770.8 698.6 760C706.3 749.2 713.5 734.6 720 725C726.5 715.4 732.5 709.2 737.5 702.5C742.5 695.8 745.8 690.8 750 685C754.2 679.2 758.8 672.9 762.5 667.5C766.2 662.1 769.6 657.1 772.5 652.5C775.4 647.9 778.1 644.2 780 640C781.9 635.8 782.9 631.7 783.8 627.5C784.7 623.3 785.4 619.2 785.5 615C785.6 610.8 785.6 607.2 784.5 602.5C783.4 597.8 781 593 778.6 586.8C776.2 580.5 773.1 572 770.3 565C767.5 558 764.8 551.7 762 545C759.2 538.3 756.1 531.1 753.6 525C751.1 518.9 748 512.3 746.9 508.4C745.8 504.5 745.8 504.5 746.9 501.7C748 498.9 750.4 495.1 753.4 491.8C756.4 488.5 760.4 485.4 765.1 481.8C769.8 478.2 776.2 473.7 781.8 470.1C787.4 466.5 792.9 463.4 798.5 460.1C804.1 456.8 808.2 454.3 815.2 450.1C822.2 445.9 831.9 440.4 840.2 435.1C848.5 429.8 858.2 424 865.2 418.4C872.2 412.8 876.9 407.5 881.9 401.7C886.9 395.9 891.7 389.2 895.3 383.4C898.9 377.6 901.8 370.3 903.6 366.7C905.4 363.1 905.7 363.2 906 361.5C906.3 359.8 909.6 358.4 905.3 356.7C901 354.9 888.1 355 880 351C871.9 347 861.2 335.8 856.6 332.8C852 329.8 853.9 332.2 852.5 333C851.1 333.8 849.1 336.4 848.4 337.7C847.7 339 849.2 338.9 848.4 341Z"/></clipPath>
</defs>
<path d="M848.4 341C847.6 343.1 846.2 345.4 843.5 350C840.8 354.6 836.6 362.6 831.9 368.4C827.2 374.2 822.2 379.4 815.2 385C808.2 390.6 798.6 397 790.2 401.7C781.9 406.4 772.1 410.1 765.1 413.4C758.1 416.7 755.4 417.8 748.4 421.7C741.4 425.6 730.3 432.6 723.4 436.8C716.5 441 712.3 443.5 706.7 446.8C701.1 450.1 695.5 452.9 690 456.8C684.5 460.7 678.9 465.1 673.4 470.1C667.9 475.1 661.4 481.8 656.7 486.8C652 491.8 648.3 496.6 645 500C641.7 503.4 643.9 506.6 637 507.5C630.1 508.4 614.7 505.5 603.5 505.4C592.3 505.3 581.1 505.6 570 506.7C558.9 507.8 544.8 510.2 536.7 511.7C528.7 513.2 525.9 513.4 521.7 515.9C517.5 518.4 514.8 523.2 511.7 526.7C508.6 530.2 506.2 534.3 503.4 536.7C500.6 539.1 500 539 495 541C490 543 481.2 545.5 473.5 548.4C465.8 551.3 456.8 554.5 448.5 558.4C440.2 562.3 431.9 566.7 423.5 571.7C415.1 576.7 406.2 582.9 398.4 588.4C390.6 593.9 382.6 600.6 376.8 605C371 609.4 367.3 611.1 363.4 615C359.5 618.9 357 623.7 353.4 628.4C349.8 633.1 345.3 638.1 341.7 643.4C338.1 648.7 334.8 654.7 331.7 660C328.6 665.3 325.9 670 323.4 675C320.9 680 318.6 685.8 316.7 690C314.8 694.2 313.3 696.3 312 700C310.7 703.7 309.6 708.4 309 712C308.4 715.6 308.5 718.4 308.4 721.7C308.3 725 308.5 728.7 308.6 732C308.7 735.3 308.7 737.9 309.2 741.7C309.7 745.5 310.5 750.8 311.5 755C312.5 759.2 313.4 762.5 315 766.7C316.6 770.9 318.8 775.5 321 780C323.2 784.5 324.4 787.3 328.4 793.4C332.4 799.5 338.9 809.6 345 816.8C351.1 824 358.6 830.7 365 836.8C371.4 842.9 377.6 848.2 383.4 853.5C389.2 858.8 393.9 863.6 400 868.5C406.1 873.4 413.3 878.6 420 883C426.7 887.4 432.5 890.5 440 895C447.5 899.5 458.6 906 465 910C471.4 914 474.2 917.5 478.4 919.3C482.6 921.1 485.8 921.7 490 921C494.2 920.3 497.8 917.9 503.4 915C509 912.1 514.5 908.8 523.4 903.5C532.3 898.2 545.7 890.5 556.8 883.5C567.9 876.5 578.9 869.6 590 861.8C601.1 854 613.8 844.5 623.5 836.7C633.2 828.9 640.1 822.8 648.5 815C656.9 807.2 665.2 799.2 673.6 790C682 780.8 690.9 770.8 698.6 760C706.3 749.2 713.5 734.6 720 725C726.5 715.4 732.5 709.2 737.5 702.5C742.5 695.8 745.8 690.8 750 685C754.2 679.2 758.8 672.9 762.5 667.5C766.2 662.1 769.6 657.1 772.5 652.5C775.4 647.9 778.1 644.2 780 640C781.9 635.8 782.9 631.7 783.8 627.5C784.7 623.3 785.4 619.2 785.5 615C785.6 610.8 785.6 607.2 784.5 602.5C783.4 597.8 781 593 778.6 586.8C776.2 580.5 773.1 572 770.3 565C767.5 558 764.8 551.7 762 545C759.2 538.3 756.1 531.1 753.6 525C751.1 518.9 748 512.3 746.9 508.4C745.8 504.5 745.8 504.5 746.9 501.7C748 498.9 750.4 495.1 753.4 491.8C756.4 488.5 760.4 485.4 765.1 481.8C769.8 478.2 776.2 473.7 781.8 470.1C787.4 466.5 792.9 463.4 798.5 460.1C804.1 456.8 808.2 454.3 815.2 450.1C822.2 445.9 831.9 440.4 840.2 435.1C848.5 429.8 858.2 424 865.2 418.4C872.2 412.8 876.9 407.5 881.9 401.7C886.9 395.9 891.7 389.2 895.3 383.4C898.9 377.6 901.8 370.3 903.6 366.7C905.4 363.1 905.7 363.2 906 361.5C906.3 359.8 909.6 358.4 905.3 356.7C901 354.9 888.1 355 880 351C871.9 347 861.2 335.8 856.6 332.8C852 329.8 853.9 332.2 852.5 333C851.1 333.8 849.1 336.4 848.4 337.7C847.7 339 849.2 338.9 848.4 341Z" fill="url(#mTop)"/>
<g clip-path="url(#cSil)">
<path d="M848.4 341L843.5 350L831.9 368.4L815.2 385L790.2 401.7L765.1 413.4L748.4 421.7L750 428.4L765.1 443.4L786.8 453.4L800.2 457.6L815.2 450.1L840.2 435.1L865.2 418.4L881.9 401.7L895.3 383.4L903.6 366.7L906 361.5L880 352L852 334Z" fill="url(#mNeckA)"/>
<path d="M748.4 421.7L723.4 436.8L706.7 446.8L690 456.8L673.4 470.1L656.7 486.8L637 507.5L608.5 543.4L663.5 571.8L675.2 556.8L703.6 520L725.3 496.7L746.9 501.7L753.4 491.8L765.1 481.8L781.8 470.1L800.2 457.6L786.8 453.4L765.1 443.4L750 428.4Z" fill="url(#mNeckB)"/>
<path d="M747 503L722 522L700 548L684 580L692 578L712 552L735 528L752 520Z" fill="#b9bccc" filter="url(#bl3)"/>
<path d="M463.5 791C470.1 784.3 482.5 775.2 498.4 760C514.2 744.8 538.9 720 558.6 700C578.3 680 597.4 659.2 616.8 640C636.2 620.8 661.3 598.3 675.2 585C689.1 571.7 691.7 568.3 700 560C708.3 551.7 717.2 543.3 725 535C732.8 526.7 742.1 511.1 746.9 510C751.7 508.9 750.8 521.2 753.6 528.4C756.4 535.6 760.3 545.1 763.6 553.4C766.9 561.7 770.8 570 773.6 578.4C776.4 586.8 779 596.5 780.3 603.5C781.5 610.5 781.4 614.7 781.1 620.2C780.8 625.8 780.5 631.5 778.6 636.8C776.8 642.1 773.6 646.1 770 652C766.4 657.9 761.7 665 757 672C752.3 679 747.8 685.7 742 694C736.2 702.3 729.3 712.2 722 722C714.7 731.8 704.7 744.8 698 753C691.3 761.2 687.4 765.8 681.9 771.3C676.4 776.8 672.2 779.5 665.2 785.7C658.2 791.9 649.9 799.6 640.2 808.4C630.5 817.2 617.9 829.2 606.8 838.4C595.7 847.6 584.6 855.6 573.5 863.4C562.4 871.2 550.6 878.9 540 885C529.4 891.1 516.9 897.1 510 900C503.1 902.9 501.7 902.9 498.4 902.6C495.1 902.4 492.8 901.1 490 898.5C487.2 895.9 484.5 892.6 481.7 886.8C478.9 880.9 476.2 872 473.4 863.4C470.6 854.8 467.2 843.9 465 835C462.8 826.1 461 815.8 460 810C459 804.2 458.4 803.2 459 800C459.6 796.8 456.9 797.7 463.5 791Z" fill="url(#mFace)"/>
<path d="M478.4 915C482.6 914.3 495.9 913.6 503.4 911C510.9 908.4 514.5 904.8 523.4 899.5C532.3 894.2 545.7 886.5 556.8 879.5C567.9 872.5 578.9 865.6 590 857.8C601.1 850 613.8 840.5 623.5 832.7C633.2 824.9 640.1 818.8 648.5 811C656.9 803.2 665.2 795.2 673.6 786C682 776.8 690.9 766.8 698.6 756C706.3 745.2 711.4 733.5 720 721C728.6 708.5 741.2 693 750 681C758.8 669 767.2 657.9 772.5 649C777.8 640.1 779.8 633.7 781.5 627.5C783.2 621.3 783.4 618.6 782.5 612C781.6 605.4 779.8 598.7 776 588C772.2 577.3 762.7 554.7 760 548" fill="none" stroke="#f1f2fa" stroke-width="5" filter="url(#bl1)"/>
<path d="M311.7 721.7L315 741.7L326.7 766.7L348.4 790L365 800L378.4 796.8L386.8 783.4L391.8 776.7L440 808.4L443.5 813.4L458.5 870L470 905L478.4 919.3L465 910L440 895L400 868.5L365 836.8L345 816.8L328.4 793.4L315 766.7L309.2 741.7L308.4 721.7Z" fill="url(#mSole)"/>
<path d="M325.9 774.2L348.4 803.4L376.8 833.5L406.8 856.8L428.5 870L465 903L470 912L440 897L400 870.5L365 838.8L345 818.8L328.4 795.4L318 775Z" fill="#dfe1ec" opacity=".9" filter="url(#bl1)"/>
<path d="M440 808.4L458.5 800L460 816.8L465 841.8L473.5 870L482 890L495 903L480 917L470 905L458.5 870L448 835Z" fill="#e9ebf6"/>
<path d="M511.7 530L573.6 573.4L576.8 577.5L560 589.5L509 535.5Z" fill="#c6c9db"/>
<path d="M509 535.5L560 589.5L556 592L505 538Z" fill="#d5d7e6"/>
<path d="M521.7 516.5L527 514.5L586.8 556.8L581 561L573.6 573.4L513 528Z" fill="#f3f4fc"/>
<path d="M516 524L574 566L573.6 573.4L511.7 530Z" fill="#d9dbea"/>
<path d="M400 750L463.5 791L458.5 800L440 808.4L391.8 776.7L385 770Z" fill="#f4f5fc"/>
<path d="M393 777L440 808L441 812L388 780Z" fill="#dcdeea" filter="url(#bl1)"/>
<path d="M398.4 752C397.2 753.3 393.1 756.7 391 760C388.9 763.3 387.7 768.2 386 772C384.3 775.8 383 780 381 783C379 786 375.2 788.8 374 790" fill="none" stroke="#d3d5e3" stroke-width="4" filter="url(#bl1)"/>
<path d="M311 722C311.5 725.3 311.8 734.8 314 742C316.2 749.2 318.8 757.2 324 765C329.2 772.8 338.5 783.7 345 789C351.5 794.3 357.7 796.2 363 797C368.3 797.8 374.7 794.5 377 794" fill="none" stroke="#f6f7fd" stroke-width="5" filter="url(#bl1)"/>
<path d="M452 788L538 703L613 628L672 574" fill="none" stroke="#f6f7fd" stroke-width="4" filter="url(#bl1)"/>
<path d="M404 746L455 700L512 641L560 592L608 546" fill="none" stroke="#f6f7fd" stroke-width="3" filter="url(#bl1)"/>
</g>
<path d="M918 207L855.5 333.5L880 352L905.5 357L966.8 224Z" fill="url(#mShaft)"/>
<path d="M852.5 333C853.9 332.2 855 331.5 856.6 332.8C858.2 334.1 858.8 338.1 862 341C865.2 343.9 871 347.7 876 350C881 352.3 887.3 353.9 892 355C896.7 356.1 901.6 355.4 904 356.5C906.4 357.6 906.2 359.7 906.2 361.5C906.2 363.3 906.4 366.8 903.7 367.5C901 368.2 895.3 367.2 890 366C884.7 364.8 877.7 362.7 872 360C866.3 357.3 859.9 353.1 856 350C852.1 346.9 849.7 343.4 848.4 341.4C847.1 339.3 847.7 339.1 848.4 337.7C849.1 336.3 851.1 333.8 852.5 333Z" fill="#f1f2f8"/>
<ellipse cx="942.4" cy="213.8" rx="25.7" ry="12.6" transform="rotate(19 942.4 213.8)" fill="#f3f4f9"/>
<ellipse cx="944" cy="211.5" rx="21.3" ry="9" transform="rotate(21 944 211.5)" fill="#e3e6f2" stroke="#30323a" stroke-width=".8"/>
<path d="M918.300 208C921 216.500 940 227.500 964 228" fill="none" stroke="#6a6d7c" stroke-width=".6"/>
<path d="M463.5 791C470.1 784.3 482.5 775.2 498.4 760C514.2 744.8 538.9 720 558.6 700C578.3 680 597.4 659.2 616.8 640C636.2 620.8 661.3 598.3 675.2 585C689.1 571.7 691.7 568.3 700 560C708.3 551.7 717.2 543.3 725 535C732.8 526.7 742.1 511.1 746.9 510C751.7 508.9 750.8 521.2 753.6 528.4C756.4 535.6 760.3 545.1 763.6 553.4C766.9 561.7 770.8 570 773.6 578.4C776.4 586.8 779 596.5 780.3 603.5C781.5 610.5 781.4 614.7 781.1 620.2C780.8 625.8 780.5 631.5 778.6 636.8C776.8 642.1 773.6 646.1 770 652C766.4 657.9 761.7 665 757 672C752.3 679 747.8 685.7 742 694C736.2 702.3 729.3 712.2 722 722C714.7 731.8 704.7 744.8 698 753C691.3 761.2 687.4 765.8 681.9 771.3C676.4 776.8 672.2 779.5 665.2 785.7C658.2 791.9 649.9 799.6 640.2 808.4C630.5 817.2 617.9 829.2 606.8 838.4C595.7 847.6 584.6 855.6 573.5 863.4C562.4 871.2 550.6 878.9 540 885C529.4 891.1 516.9 897.1 510 900C503.1 902.9 501.7 902.9 498.4 902.6C495.1 902.4 492.8 901.1 490 898.5C487.2 895.9 484.5 892.6 481.7 886.8C478.9 880.9 476.2 872 473.4 863.4C470.6 854.8 467.2 843.9 465 835C462.8 826.1 461 815.8 460 810C459 804.2 458.4 803.2 459 800C459.6 796.8 456.9 797.7 463.5 791ZM663.5 571.8L596.8 640L535 700L448.5 782.6M608.5 543.4L556.8 593.5L510 640L460 700L406.8 748M605 541L547.8 601.7L473.5 674.3L450 700L400 750M608.5 543.4L663.5 571.8M663.5 571.8C665.5 573.7 672.1 577.9 675.2 583.4C678.3 588.9 680.8 601.4 681.9 605M681.9 605L753.6 531.7M716.9 546.7L721.9 563.4M692 576L754 518M400 750L463.5 791M391.8 776.7L440 808.4M448.5 782.6C447.4 783.5 443.4 785.9 442 788C440.6 790.1 440.3 791.6 440 795C439.7 798.4 440 806.2 440 808.4M440 811L455 870L470 905M443.5 813.4L458.5 870L474 908M443.5 813.4L458.5 815M510 900C509.8 901.3 509.7 905.5 509 908C508.3 910.5 506.5 913.8 506 915M757 672C757.8 671.7 760.7 669.2 762 670C763.3 670.8 764.5 675.8 765 677M363.4 613.4L473.5 674.3M321.7 719.2L410 739.2M496 541.7L547.8 601.7M510.2 533.3L558.6 589.2M512 531L573.6 573.4M515 526L576 569M526.7 515L586.8 556.8M626.8 508.4L571.8 568.4M636.8 510L581 561L573.6 573.4M542.8 619.3L552 623.4M577 636.8L588.6 644.3M321.7 719.2C322 721.6 321.4 727.4 323.4 733.4C325.3 739.4 329.2 748.1 333.4 755C337.6 761.9 343.7 769.7 348.4 775C353.1 780.3 357.5 784.5 361.7 786.7C365.9 788.9 370.3 789.2 373.4 788.4C376.4 787.6 378.1 784.8 380 781.7C381.9 778.6 383.3 773.9 385 770C386.7 766.1 387.8 761.7 390 758.4C392.2 755.1 397 751.4 398.4 750M311.7 721.7C312.2 725 312.5 734.2 315 741.7C317.5 749.2 321.1 758.7 326.7 766.7C332.3 774.8 342 784.5 348.4 790C354.8 795.5 360 798.9 365 800C370 801.1 374.8 799.6 378.4 796.8C382 794 384.6 786.8 386.8 783.4C389 780 391 777.8 391.8 776.7M400 736.7L349.2 786.7M325.9 774.2C329.6 779.1 339.9 793.5 348.4 803.4C356.9 813.3 367.1 824.6 376.8 833.5C386.5 842.4 398.2 850.7 406.8 856.8C415.4 862.9 418.8 863.3 428.5 870C438.2 876.7 458.9 892.5 465 897M376.8 833.5L375.9 848.5M495.2 542.5C491.6 543.8 481.3 547.4 473.5 550.4C465.7 553.4 456.8 556.5 448.5 560.4C440.2 564.3 431.9 568.7 423.5 573.7C415.1 578.7 406.2 584.9 398.4 590.4C390.6 595.9 382.6 602.6 376.8 607C371 611.4 368.4 612.2 363.4 617C358.4 621.8 351.6 629.7 347 636C342.4 642.3 339.5 648.5 336 655C332.5 661.5 329 668 326 675C323 682 320 689.8 318 697C316 704.2 314.7 714.5 314 718M521.7 517.5C524.2 516.8 528.7 514.8 536.7 513.2C544.8 511.7 558.9 509.2 570 508.2C581.1 507.2 593.5 506.9 603.5 507C613.5 507.1 625.6 508.2 630 508.5M846.9 353.3C843 358.9 833 377.2 823.5 386.7C814 396.1 801.9 402.8 790.2 410C778.5 417.2 769.3 420.9 753.4 430C737.5 439.1 712.8 451 695 464.3C677.2 477.6 660.5 496.6 646.7 510C632.9 523.5 617.8 539.2 612 545M878.6 367.5C876.4 371.5 871.6 383.8 865.2 391.7C858.8 399.6 849.9 406.9 840.2 415C830.5 423.1 815.7 433.6 806.8 440C797.9 446.4 796.8 446.7 786.8 453.4C776.8 460.1 757.1 472.8 746.8 480C736.5 487.2 732.2 490.1 725 496.8C717.8 503.5 711.9 510 703.6 520C695.3 530 681.9 548.2 675.2 556.8C668.5 565.4 665.5 569.3 663.5 571.8M893.6 370C891.6 373.9 888 385.3 881.9 393.4C875.8 401.5 866.4 410.5 856.9 418.4C847.4 426.3 830.3 437.2 825 441M750.1 421.7C750.1 422.8 747.5 424.8 750 428.4C752.5 432 759 439.2 765.1 443.4C771.2 447.6 780.9 451 786.8 453.4C792.6 455.8 798 456.9 800.2 457.6M848.4 341.4C849.7 342.8 852.1 346.9 856 350C859.9 353.1 866.3 357.3 872 360C877.7 362.7 884.7 364.8 890 366C895.3 367.2 901.4 367.2 903.7 367.5M852 336C853.3 337.5 856.2 342 860 345C863.8 348 869.7 351.6 875 354C880.3 356.4 887 358.3 892 359.5C897 360.7 902.8 360.8 905 361M856.6 332.8C857.5 334.2 858.8 338.1 862 341C865.2 343.9 871 347.7 876 350C881 352.3 887.2 353.9 892 355C896.8 356.1 902.8 356.4 905 356.7" fill="none" stroke="#2a2c36" stroke-width=".75"/>
<ellipse cx="564.4" cy="630.1" rx="13" ry="9" transform="rotate(12 564.4 630.1)" fill="#eceefa" stroke="#3a3c46" stroke-width="1.400"/>
<path d="M871 303.500H930" stroke="#3a3c46" stroke-width="1"/>
<g fill="none" stroke="#c9c4bd" stroke-width="1.200"><path d="M106.200 873L126.800 852.400 159.900 852.100 139.300 872.300ZM106.200 873L118.700 909.100 151.800 908.300 139.300 872.300M151.800 908.300L172.400 887 159.900 852.100"/></g>
<path d="M162 858L170 849.500 168.500 848 175 845.500 173.500 852.500 172 851 164 859.500Z" fill="#3fae49"/>
<path d="M154 878H183V875L197 879 183 883V880.500H154Z" fill="#1f3be0"/>
<path d="M147.500 910L150.500 909 157.500 929 160 928 160.700 942 152.500 931 155 930Z" fill="#c0323e"/>
<g font-family="Liberation Sans,sans-serif" font-size="11"><text x="175.500" y="845" fill="#5fae5a">Y</text><text x="200" y="883" fill="#3a4fd0">Z</text><text x="159.500" y="955" fill="#c04a55">X</text></g>
</svg></div>
<svg class="abs" style="left:1207px;top:159px" width="26" height="26" viewBox="0 0 26 26"><defs><linearGradient id="spg" x1="0" y1="0" x2="1" y2="1"><stop offset="0" stop-color="#f0d048"/><stop offset=".45" stop-color="#e89a28"/><stop offset=".7" stop-color="#d03818"/><stop offset="1" stop-color="#c82818"/></linearGradient></defs><path d="M4 8.500A10 10 0 1 1 11 22" fill="none" stroke="url(#spg)" stroke-width="2.300"/><path d="M8.500 21.500L13 19.500 13 24.500Z" fill="#e8702a"/><path d="M13 10.500l2.300 2.300-2.300 2.300-2.300-2.300z" fill="#c82828"/></svg>
<div class="abs" style="left:1208px;top:190px;width:24px;height:1px;background:#ddd"></div>
<svg class="abs" style="left:1207px;top:202px" width="26" height="26" viewBox="0 0 26 26"><path d="M1.500 2.500h23v21h-23z" fill="#fff" stroke="#333" stroke-width="1.200"/><path d="M5 9V6h3M5 6l5 5M21 9V6h-3M21 6l-5 5M5 17v3h3M5 20l5-5M21 17v3h-3M21 20l-5-5M17 4h1M20 4h1" fill="none" stroke="#333" stroke-width="1.100"/></svg>
<svg class="abs" style="left:1207px;top:233px" width="26" height="26" viewBox="0 0 26 26"><path d="M2 13c3-5 7-7 11-7s8 2 11 7c-3 5-7 7-11 7S5 18 2 13z" fill="none" stroke="#444" stroke-width="1.300"/><circle cx="13" cy="13" r="4" fill="none" stroke="#444" stroke-width="1.300"/><path d="M4 22L22 4" stroke="#444" stroke-width="1.300"/></svg>
<svg class="abs" style="left:1207px;top:265px" width="26" height="26" viewBox="0 0 26 26"><path d="M2 10L12 4l11 5-10 6z" fill="#eee"/><path d="M2 10l11 5v8L2 18z" fill="#f3f3f5"/><path d="M13 15l10-6v8l-10 6z" fill="#ef8a1e"/><path d="M8 7l10 5v5" fill="none" stroke="#ef8a1e" stroke-width="3"/><path d="M2 10L12 4l11 5v8l-10 6-11-5zM2 10l11 5 10-6M13 15v8" fill="none" stroke="#555" stroke-width="1"/></svg>
<svg class="abs" style="left:1207px;top:297px" width="26" height="26" viewBox="0 0 26 26"><path d="M1 14l10-4 10 4-10 5z" fill="#e4e4e8" stroke="#555" stroke-width="1"/><path d="M1 14v4l10 5 10-5v-4l-10 5z" fill="#cfd0d6" stroke="#555" stroke-width="1"/><path d="M6 4v9c2 2 8 2 10 0V4z" fill="#ef8a1e" stroke="#a65b10" stroke-width=".8"/><ellipse cx="11" cy="4" rx="5" ry="2.500" fill="#f8b050" stroke="#a65b10" stroke-width=".8"/><path d="M12 22l8-7a3.500 3.500 0 1 1 3 3l-8 7z" fill="#fff" stroke="#222" stroke-width="1.200"/></svg>
<svg class="abs" style="left:1207px;top:330px" width="26" height="26" viewBox="0 0 26 26"><path d="M5 2.500H2.500v21H5M21 2.500h2.500v21H21" fill="none" stroke="#c9a25a" stroke-width="1.300"/><path d="M4 13c2.500-4 5.500-5.500 9-5.500s6.500 1.500 9 5.500c-2.500 4-5.500 5.500-9 5.500S6.500 17 4 13z" fill="#fff" stroke="#333" stroke-width="1.300"/><circle cx="13" cy="13" r="3.300" fill="#333"/></svg>
<svg class="abs" style="left:1207px;top:361px" width="26" height="26" viewBox="0 0 26 26"><path d="M1 9L9 4l4 3 4-3 8 5v10l-8 5-4-3-4 3-8-5z" fill="#eef1f3" stroke="#4a5a66" stroke-width="1"/><path d="M1 9L9 4l4 3 4-3 8 5-8 5-4-3-4 3z" fill="#9fe0e6" stroke="#3aa" stroke-width="1"/><path d="M9 14v10M17 14v10M13 11v10" stroke="#667" stroke-width="1"/><path d="M17 14l8-5v10l-8 5z" fill="#9aa6b0"/><path d="M9 14l4-3v10l-4 3z" fill="#b8c4cc"/></svg>
<svg class="abs" style="left:1207px;top:394px" width="26" height="26" viewBox="0 0 26 26"><path d="M5 6l10-2 6 6v11l-10 2-6-6z" fill="none" stroke="#d9808f" stroke-width="1.100" stroke-dasharray="2 1.300"/><path d="M5 6l6 6v11M11 12l10-2" fill="none" stroke="#d9808f" stroke-width="1.100" stroke-dasharray="2 1.300"/><path d="M11 12l10 9" stroke="#c86878" stroke-width="1"/></svg>
<svg class="abs" style="left:1207px;top:424px" width="26" height="26" viewBox="0 0 26 26"><path d="M13 2v22M2 13h22" stroke="#3aa7ae" stroke-width="1.500"/></svg>
<svg class="abs" style="left:1207px;top:457px" width="26" height="26" viewBox="0 0 26 26"><path d="M3 7l14-3 6 13-14 5z" fill="#d8d9dc" stroke="#666" stroke-width="1"/><path d="M3 7v4l6 13v-2zM9 22l14-5v2L9 24z" fill="#b9babf" stroke="#666" stroke-width=".8"/><path d="M3 18C9 8 18 8 24 18M5 9c5 2 10 6 14 12" fill="none" stroke="#c0805a" stroke-width="1"/></svg>
<svg class="abs" style="left:1207px;top:489px" width="26" height="26" viewBox="0 0 26 26"><path d="M1.500 2.500h16v17h-16z" fill="#4a66a8" stroke="#333" stroke-width="1"/><path d="M1.500 19.500l5-8 4 5 3-3 4 6z" fill="#d8dce8"/><circle cx="13" cy="7" r="2.500" fill="#e9e05a"/><path d="M12.500 11.500h6l3 3v9h-9z" fill="#fff" stroke="#222" stroke-width="1.100"/><path d="M14 18h6l-2-2.500M20 18l-2 2.500" fill="none" stroke="#222" stroke-width="1.200"/></svg>
<div class="abs" style="left:1208px;top:519px;width:24px;height:1px;background:#ddd"></div>
<div class="abs" style="left:1210px;top:977px;width:0;height:0;border-top:3px solid transparent;border-bottom:3px solid transparent;border-right:3.500px solid #222"></div>
<div class="abs" style="left:1238px;top:149px;width:1px;height:839px;background:#9a9a9a"></div>
<svg class="abs" style="left:1251px;top:159px" width="13" height="12" viewBox="0 0 13 12"><path d="M1 1.500h11v9.500H1z" fill="#fff" stroke="#222" stroke-width="1.200"/><path d="M1 2h11" stroke="#222" stroke-width="1.600"/></svg>
<div class="abs" style="left:1274px;top:156px;font-size:12px;line-height:17px;color:#222">部件导航器</div>
<div class="abs" style="left:1249px;top:180px;width:1632px;height:0"></div>
<div class="abs" style="left:1249px;top:201px;width:632px;height:758px;background:repeating-linear-gradient(180deg,#fff 0,#fff 19px,#ebebeb 19px,#ebebeb 20px,#f8f8f8 20px,#f8f8f8 39px,#ebebeb 39px,#ebebeb 40px)"></div>
<div class="abs" style="left:1249px;top:179px;width:632px;height:22px;background:linear-gradient(180deg,#f2f2f2,#eaeaea);border-top:1px solid #dcdcdc;border-bottom:1px solid #d0d0d0"></div>
<div class="abs" style="left:1450px;top:181px;width:1px;height:778px;background:#e9e9e9"></div>
<div class="abs" style="left:1450px;top:181px;width:1px;height:18px;background:#cfcfcf"></div>
<div class="abs" style="left:1474px;top:181px;width:1px;height:778px;background:#e9e9e9"></div>
<div class="abs" style="left:1474px;top:181px;width:1px;height:18px;background:#cfcfcf"></div>
<div class="abs" style="left:1497px;top:181px;width:1px;height:778px;background:#e9e9e9"></div>
<div class="abs" style="left:1497px;top:181px;width:1px;height:18px;background:#cfcfcf"></div>
<div class="abs" style="left:1597px;top:181px;width:1px;height:778px;background:#e9e9e9"></div>
<div class="abs" style="left:1597px;top:181px;width:1px;height:18px;background:#cfcfcf"></div>
<div class="abs" style="left:1697px;top:181px;width:1px;height:778px;background:#e9e9e9"></div>
<div class="abs" style="left:1697px;top:181px;width:1px;height:18px;background:#cfcfcf"></div>
<div class="abs" style="left:1797px;top:181px;width:1px;height:778px;background:#e9e9e9"></div>
<div class="abs" style="left:1797px;top:181px;width:1px;height:18px;background:#cfcfcf"></div>
<div class="nh" style="left:1256px">名称</div>
<div class="nh" style="left:1455px">当</div>
<div class="nh" style="left:1479px">最</div>
<div class="nh" style="left:1504px">图层</div>
<div class="nh" style="left:1604px">状态</div>
<div class="nh" style="left:1704px">修改日期</div>
<div class="nh" style="left:1804px">附注</div>
<div class="abs" style="left:1298px;top:187px;width:0;height:0;border-left:4px solid transparent;border-right:4px solid transparent;border-bottom:5px solid #222"></div>
<div class="abs" style="left:1259px;top:215px;width:0;height:32px;border-left:1px dotted #aaa"></div>
<svg class="abs" style="left:1255px;top:206px" width="10" height="10" viewBox="0 0 10 10"><path d="M1.500 5h6M4.500 2v6" stroke="#222" stroke-width="1"/></svg>
<svg class="abs" style="left:1255px;top:226px" width="10" height="10" viewBox="0 0 10 10"><path d="M1.500 5h6M4.500 2v6" stroke="#222" stroke-width="1"/></svg>
<svg class="abs" style="left:1255px;top:246px" width="10" height="10" viewBox="0 0 10 10"><path d="M1.500 5h6M4.500 2v6" stroke="#222" stroke-width="1"/></svg>
<svg class="abs" style="left:1268px;top:203px" width="17" height="16" viewBox="0 0 17 16"><path d="M1.500 1.500h14v13h-14z" fill="#fff" stroke="#444" stroke-width="1"/><path d="M1.500 4h14" stroke="#444"/><path d="M4 12c0-3 2-5 4-6l2 1c-1 1-2 2-2 3l4 1 1 2-4 1z" fill="#8a8a8a" stroke="#555" stroke-width=".6"/></svg>
<div class="tr" style="left:1288px;top:202px">模型视图</div>
<svg class="abs" style="left:1268px;top:223px" width="34" height="16" viewBox="0 0 34 16"><path d="M2 9l4 5 9-12" fill="none" stroke="#2eb84a" stroke-width="2"/><path d="M18 5l6-3 7 2v8l-6 3-7-2z" fill="#e8b878" stroke="#8a6a3a" stroke-width=".8"/><path d="M22 6l4-2v7l-4 2z" fill="#9aa0a8" stroke="#555" stroke-width=".6"/><circle cx="28" cy="8" r="2" fill="#ddd" stroke="#666" stroke-width=".6"/></svg>
<div class="tr" style="left:1304px;top:222px">摄像机</div>
<svg class="abs" style="left:1268px;top:242px" width="34" height="17" viewBox="0 0 34 17"><defs><radialGradient id="gb" cx=".35" cy=".3" r=".8"><stop offset="0" stop-color="#9cf08a"/><stop offset="1" stop-color="#1e9a2e"/></radialGradient></defs><circle cx="8" cy="8.500" r="6.500" fill="url(#gb)" stroke="#1a7a26" stroke-width=".8"/><path d="M17.500 1.500h14v14h-14z" fill="#fff" stroke="#666" stroke-width="1"/><path d="M20 4h6v6h-6z" fill="#f0f0f0" stroke="#c0392b" stroke-width="1"/><path d="M23 7h6v6h-6z" fill="#ef8a1e" stroke="#a65b10" stroke-width="1"/></svg>
<div class="tr" style="left:1304px;top:242px">模型历史记录</div>
<svg class="abs" style="left:1478px;top:244px" width="16" height="15" viewBox="0 0 16 15"><path d="M1.500 8l4 5L14 1.500" fill="none" stroke="#2eb84a" stroke-width="2"/></svg>
<div class="abs" style="left:1249px;top:959px;width:632px;height:17px;background:#f0f0f0"></div>
<div class="abs" style="left:1267px;top:961px;width:578px;height:13px;background:#c9c9c9"></div>
<svg class="abs" style="left:1253px;top:962px" width="10" height="11" viewBox="0 0 10 11"><path d="M7 1.500L3 5.500l4 4" fill="none" stroke="#333" stroke-width="1.600"/></svg>
<svg class="abs" style="left:1867px;top:962px" width="10" height="11" viewBox="0 0 10 11"><path d="M3 1.500L7 5.500l-4 4" fill="none" stroke="#333" stroke-width="1.600"/></svg>
<div class="abs" style="left:1249px;top:977px;width:632px;height:4px;background:#dcdcdc;border:1px solid #c4c4c4"></div>
<div class="abs" style="left:1881px;top:180px;width:1px;height:800px;background:#e0e0e0"></div>
<div class="abs" style="left:1888px;top:149px;width:32px;height:839px;background:#d7d7d7;border-left:1px solid #bcbcbc"></div>
<div class="abs" style="left:1882px;top:274px;width:36px;height:46px;background:#fff;border:1px solid #cfcfcf;border-left:none"></div>
<svg class="abs" style="left:1889px;top:148px" width="28" height="28" viewBox="0 0 28 28"><circle cx="14" cy="14" r="3.600" fill="none" stroke="#222" stroke-width="1.400"/><path d="M14 7.800v2.200M14 18v2.200M7.800 14H10M18 14h2.200M9.600 9.600l1.600 1.600M16.800 16.800l1.600 1.600M9.600 18.400l1.600-1.600M16.800 11.200l1.600-1.600" stroke="#222" stroke-width="1.700"/></svg>
<svg class="abs" style="left:1889px;top:197px" width="28" height="28" viewBox="0 0 28 28"><path d="M5 10l6-4 4 2 5-3 4 2v7l-5 3v6l-8 3-6-3z" fill="#dcdcde" stroke="#555" stroke-width="1"/><path d="M5 10l6 3 4-2 4 2 5-3M11 13v13M19 13v4l-8 3" fill="none" stroke="#555" stroke-width="1"/><path d="M11 13l4-2 4 2v10l-8 3z" fill="#b0b1b6" opacity=".8"/></svg>
<svg class="abs" style="left:1889px;top:241px" width="28" height="28" viewBox="0 0 28 28"><path d="M3 8l8-4 8 4-8 4z" fill="#f7a030"/><path d="M3 8l8 4v11l-8-4z" fill="#ef8a1e"/><path d="M11 12l8-4v11l-8 4z" fill="#a5a7ae"/><path d="M3 16l8 4v3l-8-4z" fill="#5b8fc0"/><path d="M3 8l8-4 8 4v11l-8 4-8-4zM3 8l8 4 8-4M11 12v11" fill="none" stroke="#555" stroke-width=".9"/><path d="M14 13l12 12V13L14 25z" fill="#fff" stroke="#222" stroke-width="1.200"/></svg>
<svg class="abs" style="left:1889px;top:283px" width="28" height="28" viewBox="0 0 28 28"><path d="M3 17C3 11 8 6 13 3l4 2c-3 3-4 6-4 9l9 3 3 4-9 4-13-4z" fill="#a4a6aa" stroke="#5a5a5a" stroke-width="1"/><path d="M13 3l4 2c-3 3-4 6-4 9l-4-1c0-4 1-7 4-10z" fill="#c4c5c8"/><ellipse cx="16" cy="20" rx="4" ry="2" fill="#dcdcdf" stroke="#555" stroke-width=".8"/><path d="M3 17v4l13 4 9-4" fill="none" stroke="#5a5a5a" stroke-width="1"/></svg>
<svg class="abs" style="left:1889px;top:325px" width="28" height="28" viewBox="0 0 28 28"><path d="M6 8l5-3v17l-5 3zM12 6l5-2v17l-5 3zM18 7l5-1v16l-5 3z" fill="#e4e4e6" stroke="#444" stroke-width="1"/><path d="M6 8l3 1v17l-3-1zM12 6l3 1v17M18 7l3 1" fill="none" stroke="#444" stroke-width="1"/></svg>
<svg class="abs" style="left:1889px;top:380px" width="28" height="28" viewBox="0 0 28 28"><circle cx="11" cy="17" r="8" fill="#8c8c8c" stroke="#666" stroke-width="1"/><path d="M11 13v1.500M11 16v5" stroke="#e8e8e8" stroke-width="2"/><path d="M14 5a9 9 0 0 1 9 9M14 2a12 12 0 0 1 12 12" fill="none" stroke="#c4c4c4" stroke-width="1.200"/></svg>
<svg class="abs" style="left:1889px;top:433px" width="28" height="28" viewBox="0 0 28 28"><path d="M2.500 3.500h23v21h-23z" fill="#dfe6ea" stroke="#444" stroke-width="1.200"/><path d="M2.500 7.500h23M19 5.500h1M22 5.500h1" stroke="#444" stroke-width="1"/><circle cx="14" cy="16" r="6.500" fill="#3a8ac0" stroke="#1a5a88" stroke-width="1"/><path d="M10 13c2-1 4 0 4 2s-2 2-3 4M16 12c2 1 3 3 2 5" fill="none" stroke="#bfe3f5" stroke-width="1.400"/></svg>
<svg class="abs" style="left:1889px;top:486px" width="28" height="28" viewBox="0 0 28 28"><circle cx="14" cy="14" r="10" fill="#e6e6e6" stroke="#444" stroke-width="1.200"/><path d="M14 6v8h-6" fill="none" stroke="#444" stroke-width="1.200"/></svg>
<svg class="abs" style="left:1889px;top:530px" width="28" height="28" viewBox="0 0 28 28"><defs><linearGradient id="rb" x1="0" y1="0" x2="0" y2="1"><stop offset="0" stop-color="#e02020"/><stop offset=".25" stop-color="#f0e020"/><stop offset=".5" stop-color="#20c030"/><stop offset=".75" stop-color="#20a0e0"/><stop offset="1" stop-color="#2030d0"/></linearGradient></defs><path d="M4 3h8v22H4z" fill="url(#rb)"/><path d="M13 8l8 14 3-1-8-14z" fill="#222"/><path d="M12 6l3 1-2 3z" fill="#ddd"/></svg>
<svg class="abs" style="left:1889px;top:572px" width="28" height="28" viewBox="0 0 28 28"><path d="M6 4v18M9 3v20M12 5v16" stroke="#3a7ad0" stroke-width="2"/><path d="M4 20c4 3 9 3 13 0" fill="none" stroke="#4a9a5a" stroke-width="1.500"/><path d="M12 9h13l-5 5 4 8-3 1-4-8-5 3z" fill="#2a4a78" stroke="#1a2a48" stroke-width=".6"/></svg>
<svg class="abs" style="left:1889px;top:613px" width="28" height="28" viewBox="0 0 28 28"><path d="M3.500 7.500h5l2-3h5l2 3h7v17h-21z" fill="#f4f4f4" stroke="#444" stroke-width="1.200"/><path d="M8 11l11 11M19 11L8 22" stroke="#3a8a5a" stroke-width="2.400"/><path d="M8 11l11 11M19 11L8 22" stroke="#9ad0b0" stroke-width=".8"/><circle cx="8.500" cy="11.500" r="2" fill="none" stroke="#2a6a4a" stroke-width="1.200"/><circle cx="18.500" cy="11.500" r="2" fill="none" stroke="#2a6a4a" stroke-width="1.200"/></svg>
<div class="abs" style="left:0;top:988px;width:1920px;height:31px;background:#fff"></div>
<div class="abs" style="left:0;top:1016px;width:1920px;height:1px;background:#d0d0d0"></div>
<svg class="abs" style="left:11px;top:996px" width="14" height="14" viewBox="0 0 14 14"><path d="M1.500 3h10M1.500 7h10M1.500 11h10" stroke="#333" stroke-width="1.100"/></svg>
<div class="abs" style="left:29px;top:994px;font-size:11.500px;line-height:17px;color:#222;white-space:nowrap">菜单(<u>M</u>)</div>
<div class="abs" style="left:75px;top:1001px;width:0;height:0;border-left:3px solid transparent;border-right:3px solid transparent;border-top:3.500px solid #222"></div>
<svg class="abs" style="left:92px;top:998px" width="12" height="10" viewBox="0 0 12 10"><path d="M1 3h10M1 7h10" stroke="#222" stroke-width="1.500"/></svg>
<div class="abs" style="left:113px;top:992px;width:1px;height:22px;background:#dcdcdc"></div>
<div class="abs" style="left:127px;top:992px;width:149px;height:22px;border:1px solid #7a7a7a;background:#fff;font-size:11px;letter-spacing:.35px;line-height:19px;padding-left:2px;color:#111;white-space:nowrap">无选择过滤器</div><div class="abs" style="left:264px;top:1001px;width:0;height:0;border-left:4px solid transparent;border-right:4px solid transparent;border-top:4.500px solid #222"></div>
<svg class="abs" style="left:284px;top:994px" width="18" height="18" viewBox="0 0 18 18" fill="none" stroke="#b8b8b8" stroke-width="1.100"><path d="M1.500 2.500h11l-4 5v6l-3-2v-4z"/><path d="M12 13a3 3 0 1 0 0-5M12 15l-2-2 2-2"/></svg>
<div class="abs" style="left:309px;top:992px;width:156px;height:22px;border:1px solid #7a7a7a;background:#fff;font-size:11px;letter-spacing:.35px;line-height:19px;padding-left:2px;color:#111;white-space:nowrap">整个装配</div><div class="abs" style="left:453px;top:1001px;width:0;height:0;border-left:4px solid transparent;border-right:4px solid transparent;border-top:4.500px solid #222"></div>
<div class="abs" style="left:472px;top:991px;width:22px;height:24px;background:#cfe6f5"></div>
<svg class="abs" style="left:472px;top:992px" width="22" height="22" viewBox="0 0 22 22"><path d="M5 7l6-3 6 3-6 3z" fill="#e4e4e8"/><path d="M5 7l6 3v9l-6-3z" fill="#ef8a1e"/><path d="M11 10l6-3v9l-6 3z" fill="#a5a7ae"/><path d="M5 7l6-3 6 3v9l-6 3-6-3zM5 7l6 3 6-3M11 10v9" fill="none" stroke="#666" stroke-width=".9"/><path d="M14 3l4-1 1 4" fill="none" stroke="#888" stroke-width=".8"/></svg>
<svg class="abs" style="left:496px;top:992px" width="22" height="22" viewBox="0 0 22 22"><path d="M6 10l5-5 8 8-5 5z" fill="none" stroke="#c4c4c4" stroke-width="1.100"/><path d="M4 4v6M1 7h6" stroke="#9ccfd4" stroke-width="1.100"/><circle cx="12.500" cy="11.500" r="2" fill="none" stroke="#c4c4c4"/></svg>
<svg class="abs" style="left:522px;top:992px" width="22" height="22" viewBox="0 0 22 22"><path d="M4 5l7-2 7 2-7 2z" fill="#eee" stroke="#555" stroke-width=".9"/><path d="M5 7v4l4 3v-5" fill="#e4e4e8" stroke="#555" stroke-width=".9"/><path d="M10.500 9.500h8v10h-8z" fill="#fff" stroke="#333" stroke-width="1"/><path d="M12.500 12.500h1.500v1.500h-1.500zM12.500 16h1.500v1.500h-1.500zM15.500 13.200h2M15.500 16.800h2" fill="none" stroke="#333" stroke-width=".9"/></svg>
<div class="abs" style="left:548px;top:1001px;width:0;height:0;border-left:3px solid transparent;border-right:3px solid transparent;border-top:3.500px solid #222"></div>
<svg class="abs" style="left:557px;top:992px" width="22" height="22" viewBox="0 0 22 22"><path d="M3 4v14h2M19 4v14h-2" fill="none" stroke="#c8c8c8" stroke-width="1.100"/><path d="M8 8l6 6M8 14l6-6M14 14l3 3" stroke="#c8c8c8" stroke-width="1.100"/><circle cx="16" cy="16" r="1.800" fill="none" stroke="#c8c8c8"/></svg>
<svg class="abs" style="left:582px;top:992px" width="22" height="22" viewBox="0 0 22 22"><path d="M3 7l8-4 8 4-8 4z" fill="#f4f4f6"/><path d="M3 7l8 4v8l-8-4z" fill="#f8dcb8"/><path d="M11 11l8-4v8l-8 4z" fill="#e8c89a"/><path d="M3 7l8-4 8 4v8l-8 4-8-4zM3 7l8 4 8-4M11 11v8" fill="none" stroke="#b8864a" stroke-width=".9"/><circle cx="15" cy="15" r="3.500" fill="none" stroke="#222" stroke-width="1.100"/><path d="M15 10v10M10 15h10" stroke="#222" stroke-width="1.100"/></svg>
<svg class="abs" style="left:607px;top:992px" width="22" height="22" viewBox="0 0 22 22"><path d="M3.500 3.500h12v12h-12z" fill="#fff" stroke="#d8742a" stroke-width="1.300"/><circle cx="15" cy="15" r="3.500" fill="none" stroke="#222" stroke-width="1.100"/><path d="M15 10v10M10 15h10" stroke="#222" stroke-width="1.100"/></svg>
<div class="abs" style="left:634px;top:1001px;width:0;height:0;border-left:3px solid transparent;border-right:3px solid transparent;border-top:3.500px solid #222"></div>
<svg class="abs" style="left:648px;top:992px" width="22" height="22" viewBox="0 0 22 22"><path d="M3 7l8-4 8 4-8 4z" fill="#f0f0f2"/><path d="M3 7l8 4v8l-8-4z" fill="#f3d9c9"/><path d="M11 11l8-4v8l-8 4z" fill="#d8dade"/><path d="M3 7l8-4 8 4v8l-8 4-8-4zM3 7l8 4 8-4M11 11v8" fill="none" stroke="#a0a0a0" stroke-width=".9"/><path d="M3 7l8 4 8-4" fill="none" stroke="#e8a080" stroke-width="1.200"/></svg>
<svg class="abs" style="left:672px;top:992px" width="22" height="22" viewBox="0 0 22 22"><path d="M3 7l8-4 8 4-8 4z" fill="#f0f0f2"/><path d="M3 7l8 4v8l-8-4z" fill="#f5e3d6"/><path d="M11 11l8-4v8l-8 4z" fill="#dedfe3"/><path d="M3 7l8-4 8 4v8l-8 4-8-4zM3 7l8 4 8-4M11 11v8" fill="none" stroke="#b8a090" stroke-width=".9"/><path d="M11 3v8M3 15l8-4 8 4" fill="none" stroke="#e8a080" stroke-width="1"/></svg>
<svg class="abs" style="left:708px;top:992px" width="22" height="22" viewBox="0 0 22 22"><path d="M3.500 4.500h15v14h-15z" fill="#fff" stroke="#333" stroke-width="1.100"/><path d="M3.500 7.500h15M14 6h1M16.500 6h1" stroke="#333" stroke-width="1"/><circle cx="10" cy="12" r="2.800" fill="none" stroke="#333" stroke-width="1.100"/><path d="M8 14l-3 3" stroke="#333" stroke-width="1.400"/></svg>
<svg class="abs" style="left:734px;top:992px" width="22" height="22" viewBox="0 0 22 22"><path d="M3.500 4.500h15v14h-15z" fill="#fff" stroke="#333" stroke-width="1.100"/><path d="M3.500 7.500h15M6 13h10M8 11l-2 2 2 2M14 11l2 2-2 2" fill="none" stroke="#333" stroke-width="1"/></svg>
<svg class="abs" style="left:758px;top:992px" width="22" height="22" viewBox="0 0 22 22"><path d="M3.500 4.500h15v14h-15z" fill="#fff" stroke="#333" stroke-width="1.100"/><path d="M3.500 7.500h15M14 6h1M16.500 6h1" stroke="#333" stroke-width="1"/><path d="M13.500 11a3.300 3.300 0 1 0 .8 3M14.500 9.500v2.500h-2.500" fill="none" stroke="#333" stroke-width="1.100"/></svg>
<svg class="abs" style="left:784px;top:992px" width="22" height="22" viewBox="0 0 22 22"><path d="M3 7l8-3 8 3-8 4z" fill="#f2f2f4" stroke="#444" stroke-width=".9"/><path d="M3 7v5l8 6v-7z" fill="#8a8c94" stroke="#444" stroke-width=".9"/><path d="M11 11l8-4v5l-8 6z" fill="#5a5c64" stroke="#444" stroke-width=".9"/></svg>
<svg class="abs" style="left:808px;top:992px" width="22" height="22" viewBox="0 0 22 22"><path d="M3 7l8-4 8 4-8 4z" fill="#f4f4f4"/><path d="M3 7l8 4v8l-8-4z" fill="#f4f4f4"/><path d="M11 11l8-4v8l-8 4z" fill="#e8e8e8"/><path d="M3 7l8-4 8 4v8l-8 4-8-4zM3 7l8 4 8-4M11 11v8" fill="none" stroke="#c4c4c4" stroke-width=".9"/><circle cx="15" cy="15" r="3.500" fill="#f4f4f4" stroke="#c4c4c4" stroke-width="1.100"/><circle cx="15" cy="15" r="1.200" fill="#c4c4c4"/></svg>
<svg class="abs" style="left:834px;top:992px" width="22" height="22" viewBox="0 0 22 22"><path d="M3.500 3.500h15v15h-15z" fill="#fff" stroke="#333" stroke-width="1.100"/><path d="M6 8V6h2M16 8V6h-2M6 14v2h2M16 14v2h-2M13 5h1M15.500 5h1" fill="none" stroke="#333" stroke-width="1"/></svg>
<div class="abs" style="left:861px;top:1001px;width:0;height:0;border-left:3px solid transparent;border-right:3px solid transparent;border-top:3.500px solid #222"></div>
<svg class="abs" style="left:873px;top:992px" width="22" height="22" viewBox="0 0 22 22"><path d="M3 14C3 9 6 5 10 3l3 1c-2 2-3 5-3 7l7 2 3 3-8 3-9-3z" fill="#8f9196" stroke="#555" stroke-width=".9"/><path d="M3 14v2l9 3 8-3" fill="none" stroke="#555" stroke-width=".9"/></svg>
<div class="abs" style="left:900px;top:1001px;width:0;height:0;border-left:3px solid transparent;border-right:3px solid transparent;border-top:3.500px solid #222"></div>
<svg class="abs" style="left:914px;top:992px" width="22" height="22" viewBox="0 0 22 22"><path d="M4 7l7-3 7 3-7 3z" fill="#e8e8ea"/><path d="M4 7l7 3v9l-7-3z" fill="#c8c9ce"/><path d="M11 10l7-3v9l-7 3z" fill="#8a8c94"/><path d="M4 7l7-3 7 3v9l-7 3-7-3zM4 7l7 3 7-3M11 10v9" fill="none" stroke="#444" stroke-width=".9"/></svg>
<div class="abs" style="left:941px;top:1001px;width:0;height:0;border-left:3px solid transparent;border-right:3px solid transparent;border-top:3.500px solid #222"></div>
<svg class="abs" style="left:954px;top:992px" width="22" height="22" viewBox="0 0 22 22"><path d="M4 7l7-3 7 3v8l-7 4-7-4z" fill="#e4e4e8" stroke="#444" stroke-width=".9"/><circle cx="10" cy="10" r="4" fill="none" stroke="#444" stroke-width=".9"/><path d="M11.500 10.500h7v9h-7z" fill="#fff" stroke="#333" stroke-width="1"/><path d="M13.200 13h1.300v1.300h-1.300zM13.200 16h1.300v1.300h-1.300zM16 13.600h1.500M16 16.600h1.500" fill="none" stroke="#333" stroke-width=".8"/></svg>
<div class="abs" style="left:980px;top:1001px;width:0;height:0;border-left:3px solid transparent;border-right:3px solid transparent;border-top:3.500px solid #222"></div>
<div class="abs" style="left:1910px;top:1005px;width:0;height:0;border-left:3px solid transparent;border-right:3px solid transparent;border-top:3.500px solid #222"></div>
</body></html>
